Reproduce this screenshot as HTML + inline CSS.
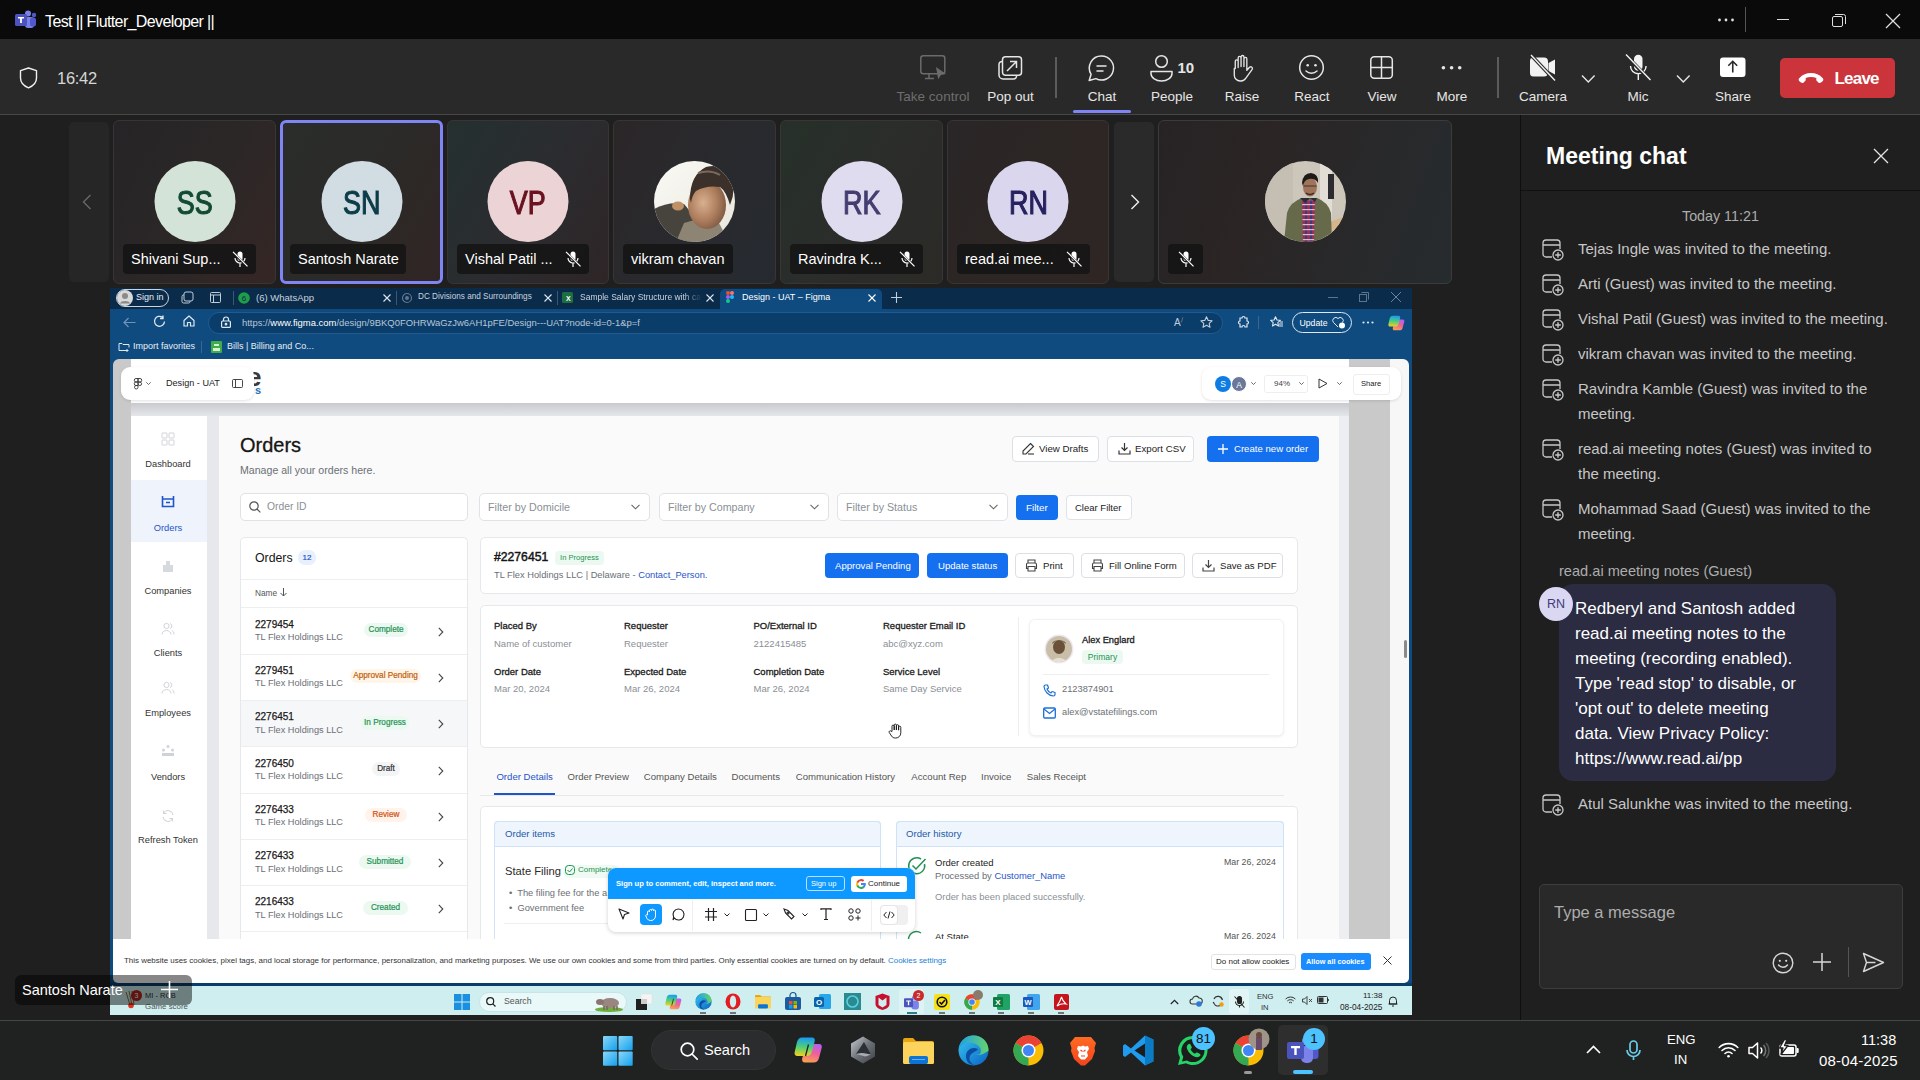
<!DOCTYPE html>
<html><head><meta charset="utf-8">
<style>
*{margin:0;padding:0;box-sizing:border-box}
html,body{width:1920px;height:1080px;overflow:hidden;background:#1f1f1f;font-family:"Liberation Sans",sans-serif;}
.a{position:absolute}
.t{position:absolute;white-space:nowrap;line-height:1}
svg{position:absolute;overflow:visible}
/* title bar */
#titlebar{left:0;top:0;width:1920px;height:39px;background:#0a0a0a}
#toolbar{left:0;top:39px;width:1920px;height:75px;background:#292929}
#tbline{left:0;top:114px;width:1920px;height:1px;background:#474747}
.lbl{position:absolute;top:90px;font-size:13.5px;color:#e6e6e6;white-space:nowrap;line-height:1;text-align:center;transform:translateX(-50%)}
/* tiles */
.tile{position:absolute;top:120px;height:164px;border-radius:6px;border:1px solid #3a3535;overflow:hidden}
.av{position:absolute;width:81px;height:81px;border-radius:50%;left:50%;top:41px;transform:translateX(-50%);text-align:center;line-height:84px;font-size:38px;-webkit-text-stroke:0.6px currentColor}
.nm{position:absolute;left:9px;top:123px;height:30px;background:rgba(20,20,20,.85);border-radius:4px;color:#fff;font-size:14.5px;line-height:30px;padding:0 8px;white-space:nowrap}
/* chat */
#chat{left:1521px;top:115px;width:399px;height:905px;background:#1f1f1f}
.msg{position:absolute;left:57px;color:#c7c7c7;font-size:15px;line-height:25px;width:320px}
.mi{position:absolute;left:-36px;top:3px}
/* taskbar */
#taskbar{left:0;top:1020px;width:1920px;height:60px;background:#202221;border-top:1px solid #444746}
</style></head>
<body>
<div id="titlebar" class="a">
  <svg style="left:15px;top:10px" width="22" height="20" viewBox="0 0 22 20">
    <circle cx="13" cy="3.5" r="3" fill="#7b83eb"/><circle cx="19" cy="5" r="2.2" fill="#5059c9"/>
    <rect x="10" y="7" width="9" height="11" rx="3" fill="#7b83eb"/>
    <rect x="15" y="7.5" width="6" height="9" rx="2.5" fill="#5059c9"/>
    <rect x="0" y="4" width="12" height="12" rx="1.5" fill="#4b53bc"/>
    <path d="M3 7h6v1.6H6.9V13H5.1V8.6H3z" fill="#fff"/>
  </svg>
  <div class="t" style="left:45px;top:14px;font-size:16px;letter-spacing:-0.62px;color:#fff">Test || Flutter_Developer ||</div>
  <svg style="left:1717px;top:17.5px" width="20" height="4" viewBox="0 0 20 4" fill="#e0e0e0"><circle cx="2.5" cy="2" r="1.4"/><circle cx="9" cy="2" r="1.4"/><circle cx="15.5" cy="2" r="1.4"/></svg>
  <div class="a" style="left:1745px;top:7px;width:1px;height:25px;background:#555"></div>
  <div class="a" style="left:1777px;top:19px;width:12px;height:1px;background:#ddd"></div>
  <svg style="left:1832px;top:13px" width="14" height="14" viewBox="0 0 14 14"><rect x="0.5" y="3.5" width="10" height="10" rx="1.5" fill="none" stroke="#ddd"/><path d="M3 1.5h8.5a2 2 0 0 1 2 2V11" fill="none" stroke="#ddd"/></svg>
  <svg style="left:1885px;top:12.5px" width="16" height="16" viewBox="0 0 16 16"><path d="M1 1L15 15M15 1L1 15" stroke="#ddd" stroke-width="1.3"/></svg>
</div>
<div id="toolbar" class="a">
  <svg style="left:19px;top:28px" width="19" height="22" viewBox="0 0 19 22"><path d="M9.5 1L17.5 3.6V11c0 4.5-3.4 8-8 9.8C4.9 19 1.5 15.5 1.5 11V3.6z" fill="none" stroke="#f0f0f0" stroke-width="1.4" stroke-linejoin="round"/></svg>
  <div class="t" style="left:57px;top:31px;font-size:16.5px;color:#d6d6d6;letter-spacing:-0.3px">16:42</div>
</div>
<div class="a" style="left:0;top:0;width:1920px;height:114px">
  <!-- take control -->
  <svg style="left:920px;top:55px" width="28" height="27" viewBox="0 0 28 27" fill="none" stroke="#6b6b6b" stroke-width="1.5"><rect x="0.8" y="0.8" width="24" height="18" rx="2.5"/><path d="M9 19v4.5M5 23.5h9"/><path d="M16 12l10 7-5 0.8-2.8 4.5z" fill="#6b6b6b" stroke="none"/></svg>
  <div class="lbl" style="left:933px;color:#6e6e6e">Take control</div>
  <!-- pop out -->
  <svg style="left:998px;top:56px" width="25" height="24" viewBox="0 0 25 24" fill="none" stroke="#e6e6e6" stroke-width="1.5"><rect x="4.5" y="0.8" width="19" height="18.5" rx="3"/><path d="M4.5 5.5a3 3 0 0 0-3.5 3V19a4 4 0 0 0 4 4h10.5a3 3 0 0 0 3-3.5"/><path d="M9 15l9-9M12 5.5h6.5V12"/></svg>
  <div class="lbl" style="left:1010.5px">Pop out</div>
  <div class="a" style="left:1055px;top:57px;width:1.5px;height:41px;background:#5c5c5c"></div>
  <!-- chat -->
  <svg style="left:1088px;top:55px" width="27" height="27" viewBox="0 0 27 27" fill="none" stroke="#e6e6e6" stroke-width="1.5"><path d="M13.5 1a12 12 0 1 1-5.6 22.6L1.2 25.5l1.9-6.2A12 12 0 0 1 13.5 1z" stroke-linejoin="round"/><path d="M9 11h9M9 16h6" stroke-linecap="round"/></svg>
  <div class="lbl" style="left:1102px">Chat</div>
  <div class="a" style="left:1073px;top:110px;width:58px;height:3px;border-radius:2px;background:#7f85f5"></div>
  <!-- people -->
  <svg style="left:1150px;top:55px" width="24" height="27" viewBox="0 0 24 27" fill="none" stroke="#e6e6e6" stroke-width="1.5"><circle cx="11.5" cy="6.5" r="5.8"/><path d="M1 16.5h21v2c0 4.5-5 7.5-10.5 7.5S1 23 1 18.5z" stroke-linejoin="round"/></svg>
  <div class="t" style="left:1177.5px;top:60px;font-size:15px;font-weight:700;color:#e6e6e6">10</div>
  <div class="lbl" style="left:1172px">People</div>
  <!-- raise -->
  <svg style="left:1231px;top:55px" width="23" height="27" viewBox="0 0 23 28" fill="none" stroke="#e6e6e6" stroke-width="1.4" stroke-linejoin="round" stroke-linecap="round"><path d="M4 14V6.5a1.5 1.5 0 0 1 3 0V13M7 12V3a1.5 1.5 0 0 1 3 0v9M10 12V2a1.5 1.5 0 0 1 3 0v10M13 12V4a1.5 1.5 0 0 1 3 0v12l2.5-3a1.8 1.8 0 0 1 3 2L15 24a6 6 0 0 1-5 3H9a6 6 0 0 1-6-6v-7"/></svg>
  <div class="lbl" style="left:1242px">Raise</div>
  <!-- react -->
  <svg style="left:1299px;top:55px" width="26" height="26" viewBox="0 0 26 26" fill="none" stroke="#e6e6e6" stroke-width="1.5"><circle cx="12.5" cy="12.5" r="11.8"/><circle cx="8.7" cy="10.2" r="1.3" fill="#e6e6e6" stroke="none"/><circle cx="16.5" cy="10.2" r="1.3" fill="#e6e6e6" stroke="none"/><path d="M7 16c3 3 8 3 11 0" stroke-linecap="round"/></svg>
  <div class="lbl" style="left:1312px">React</div>
  <!-- view -->
  <svg style="left:1370px;top:56px" width="24" height="24" viewBox="0 0 24 24" fill="none" stroke="#e6e6e6" stroke-width="1.5"><rect x="0.8" y="0.8" width="21.5" height="21.5" rx="3.5"/><path d="M11.5 1v21M1 11.5h21"/></svg>
  <div class="lbl" style="left:1382px">View</div>
  <!-- more -->
  <svg style="left:1440px;top:65px" width="24" height="6" viewBox="0 0 24 6" fill="#e6e6e6"><circle cx="3.4" cy="2.7" r="1.8"/><circle cx="11.6" cy="2.7" r="1.8"/><circle cx="19.7" cy="2.7" r="1.8"/></svg>
  <div class="lbl" style="left:1452px">More</div>
  <div class="a" style="left:1497px;top:57px;width:1.5px;height:41px;background:#5c5c5c"></div>
  <!-- camera -->
  <svg style="left:1529px;top:54px" width="28" height="28" viewBox="0 0 28 28"><path d="M4 3.5h11a4 4 0 0 1 4 4v11a4 4 0 0 1-4 4H4.5a3.5 3.5 0 0 1-3.5-3.5V7a3.5 3.5 0 0 1 3-3.5z" fill="#f2f2f2"/><path d="M19.5 9l6.5-3.5v15L19.5 17z" fill="#f2f2f2"/><path d="M1.5 0.5l24 25.5" stroke="#292929" stroke-width="3.5"/><path d="M2 1l24 25.5" stroke="#f2f2f2" stroke-width="1.4"/></svg>
  <div class="lbl" style="left:1543px">Camera</div>
  <svg style="left:1581px;top:74px" width="15" height="9" viewBox="0 0 15 9" fill="none" stroke="#e6e6e6" stroke-width="1.4"><path d="M1 1.5l6.3 6.5 6.3-6.5"/></svg>
  <!-- mic -->
  <svg style="left:1625px;top:54px" width="27" height="28" viewBox="0 0 27 28"><rect x="9" y="0.8" width="8.5" height="16" rx="4.25" fill="#f2f2f2"/><path d="M5.5 12a7.8 7.8 0 0 0 15.6 0M13.3 20v6" fill="none" stroke="#f2f2f2" stroke-width="1.4"/><path d="M0.8 1l24.5 25.5" stroke="#292929" stroke-width="3.5"/><path d="M1 0.6l24.5 25.5" stroke="#f2f2f2" stroke-width="1.4"/></svg>
  <div class="lbl" style="left:1638px">Mic</div>
  <svg style="left:1676px;top:74px" width="15" height="9" viewBox="0 0 15 9" fill="none" stroke="#e6e6e6" stroke-width="1.4"><path d="M1 1.5l6.3 6.5 6.3-6.5"/></svg>
  <!-- share -->
  <svg style="left:1720px;top:57px" width="26" height="21" viewBox="0 0 26 21"><rect x="0" y="0.5" width="25.5" height="19.5" rx="3" fill="#fff"/><path d="M12.75 15.5V4.5M8.3 8.8l4.45-4.5 4.45 4.5" fill="none" stroke="#292929" stroke-width="1.6"/></svg>
  <div class="lbl" style="left:1733px">Share</div>
  <!-- leave -->
  <div class="a" style="left:1780px;top:58px;width:115px;height:40px;border-radius:5px;background:#cc343c"></div>
  <svg style="left:1798px;top:72px" width="26" height="12" viewBox="0 0 26 12"><path d="M1.2 6.2C4.5 2.5 8.5 1 13 1s8.5 1.5 11.8 5.2c.8.9.7 2.3-.2 3l-1.6 1.4c-.8.6-1.9.6-2.6-.1l-1.5-1.4c-.5-.5-.8-1.2-.7-1.9l.2-1.3C16.7 5.4 14.9 5.1 13 5.1s-3.7.3-5.4.8l.2 1.3c.1.7-.2 1.4-.7 1.9L5.6 10.5c-.7.7-1.8.7-2.6.1L1.4 9.2C.5 8.5.4 7.1 1.2 6.2z" fill="#fff"/></svg>
  <div class="t" style="left:1834.5px;top:70px;font-size:17px;font-weight:700;color:#fff;letter-spacing:-0.8px">Leave</div>
</div>
<div id="tbline" class="a"></div>
<div class="a" style="left:69px;top:122px;width:40px;height:160px;border-radius:5px;background:#262626"></div>
<svg style="left:82px;top:194px" width="10" height="16" viewBox="0 0 10 16"><path d="M8.5 1L1.5 8l7 7" fill="none" stroke="#6a6a6a" stroke-width="1.3"/></svg>
<div class="tile" style="left:113px;width:163px;background:linear-gradient(120deg,#262426 0%,#2b2727 50%,#352625 100%);"><div class="av" style="background:#d3e3d8;color:#134a33;font-size:29px;top:40px"><span style="display:inline-block;transform:scale(0.93,1.12);-webkit-text-stroke:1px currentColor">SS</span></div>
  <div class="nm" style="left:9px;top:123px;width:133px">Shivani Sup...<svg style="left:109px;top:7px" width="16" height="17" viewBox="0 0 16 17"><rect x="5.5" y="0.5" width="5" height="9.5" rx="2.5" fill="#fff"/><path d="M3 7a5 5 0 0 0 10 0M8 12v4" fill="none" stroke="#fff" stroke-width="1.2"/><path d="M0.8 1.2l14.5 14.5" stroke="#161616" stroke-width="2.5"/><path d="M1 0.8l14.5 14.5" stroke="#fff" stroke-width="1.2"/></svg></div></div>
<div class="tile" style="left:280px;width:163px;background:linear-gradient(120deg,#2a2d2b 0%,#2b2a28 50%,#302524 100%);border:3px solid #7f85f5;"><div class="av" style="background:#d2dde3;color:#0c3c48;font-size:29px;top:38px"><span style="display:inline-block;transform:scale(0.93,1.12);-webkit-text-stroke:1px currentColor">SN</span></div>
  <div class="nm" style="left:7px;top:121px;width:116px">Santosh Narate</div></div>
<div class="tile" style="left:447px;width:162px;background:linear-gradient(120deg,#24302f 0%,#2b2c30 50%,#2e2526 100%);"><div class="av" style="background:#ebd3d6;color:#6a1220;font-size:29px;top:40px"><span style="display:inline-block;transform:scale(0.93,1.12);-webkit-text-stroke:1px currentColor">VP</span></div>
  <div class="nm" style="left:9px;top:123px;width:132px">Vishal Patil ...<svg style="left:108px;top:7px" width="16" height="17" viewBox="0 0 16 17"><rect x="5.5" y="0.5" width="5" height="9.5" rx="2.5" fill="#fff"/><path d="M3 7a5 5 0 0 0 10 0M8 12v4" fill="none" stroke="#fff" stroke-width="1.2"/><path d="M0.8 1.2l14.5 14.5" stroke="#161616" stroke-width="2.5"/><path d="M1 0.8l14.5 14.5" stroke="#fff" stroke-width="1.2"/></svg></div></div>
<div class="tile" style="left:613px;width:163px;background:linear-gradient(120deg,#2b2628 0%,#292a2e 50%,#262a30 100%);">
  <div class="nm" style="left:9px;top:123px;width:110px">vikram chavan</div></div>
<div class="tile" style="left:780px;width:163px;background:linear-gradient(120deg,#263029 0%,#2b2d2b 50%,#2b2a27 100%);"><div class="av" style="background:#e0dcef;color:#443e70;font-size:29px;top:40px"><span style="display:inline-block;transform:scale(0.93,1.12);-webkit-text-stroke:1px currentColor">RK</span></div>
  <div class="nm" style="left:9px;top:123px;width:133px">Ravindra K...<svg style="left:109px;top:7px" width="16" height="17" viewBox="0 0 16 17"><rect x="5.5" y="0.5" width="5" height="9.5" rx="2.5" fill="#fff"/><path d="M3 7a5 5 0 0 0 10 0M8 12v4" fill="none" stroke="#fff" stroke-width="1.2"/><path d="M0.8 1.2l14.5 14.5" stroke="#161616" stroke-width="2.5"/><path d="M1 0.8l14.5 14.5" stroke="#fff" stroke-width="1.2"/></svg></div></div>
<div class="tile" style="left:947px;width:162px;background:linear-gradient(120deg,#2a2527 0%,#2c2624 50%,#2f2624 100%);"><div class="av" style="background:#d9d6ee;color:#26225f;font-size:29px;top:40px"><span style="display:inline-block;transform:scale(0.93,1.12);-webkit-text-stroke:1px currentColor">RN</span></div>
  <div class="nm" style="left:9px;top:123px;width:133px">read.ai mee...<svg style="left:109px;top:7px" width="16" height="17" viewBox="0 0 16 17"><rect x="5.5" y="0.5" width="5" height="9.5" rx="2.5" fill="#fff"/><path d="M3 7a5 5 0 0 0 10 0M8 12v4" fill="none" stroke="#fff" stroke-width="1.2"/><path d="M0.8 1.2l14.5 14.5" stroke="#161616" stroke-width="2.5"/><path d="M1 0.8l14.5 14.5" stroke="#fff" stroke-width="1.2"/></svg></div></div>
<div class="a" style="left:1114px;top:122px;width:40px;height:160px;border-radius:5px;background:#2a2a2a"></div>
<svg style="left:1130px;top:194px" width="10" height="16" viewBox="0 0 10 16"><path d="M1.5 1l7 7-7 7" fill="none" stroke="#f0f0f0" stroke-width="1.4"/></svg>
<div class="tile" style="left:1158px;width:294px;background:linear-gradient(110deg,#272324 0%,#2b2525 35%,#28292b 70%,#262b2e 100%);border-color:#3b3b3b">
  <div class="nm" style="left:9px;top:123px;width:35px"><svg style="left:10px;top:7px" width="16" height="17" viewBox="0 0 16 17"><rect x="5.5" y="0.5" width="5" height="9.5" rx="2.5" fill="#fff"/><path d="M3 7a5 5 0 0 0 10 0M8 12v4" fill="none" stroke="#fff" stroke-width="1.2"/><path d="M0.8 1.2l14.5 14.5" stroke="#161616" stroke-width="2.5"/><path d="M1 0.8l14.5 14.5" stroke="#fff" stroke-width="1.2"/></svg></div></div>
<svg style="left:654px;top:161px" width="81" height="81" viewBox="0 0 81 81"><defs><clipPath id="cv"><circle cx="40.5" cy="40.5" r="40.5"/></clipPath>
<radialGradient id="fv" cx="0.4" cy="0.45" r="0.65"><stop offset="0" stop-color="#d8b090"/><stop offset="0.55" stop-color="#b08060"/><stop offset="1" stop-color="#7a5640"/></radialGradient>
<linearGradient id="bgv" x1="0" y1="0" x2="1" y2="1"><stop offset="0" stop-color="#fafaf5"/><stop offset="1" stop-color="#e8e6dc"/></linearGradient></defs>
<g clip-path="url(#cv)"><rect width="81" height="81" fill="url(#bgv)"/>
<path d="M0 48 Q15 40 30 43 L40 55 L38 81 L0 81z" fill="#47443e"/>
<path d="M22 81 L30 62 Q45 56 65 62 L75 81z" fill="#8e8474"/>
<ellipse cx="53" cy="44" rx="19" ry="24" fill="url(#fv)"/>
<path d="M36 38 Q36 14 52 6 Q70 2 78 16 Q82 30 76 44 Q72 30 66 26 Q52 24 42 30 Q38 34 37 42z" fill="#3b302a"/>
<path d="M44 12 Q56 8 66 14" stroke="#7a6a5e" stroke-width="2" fill="none"/>
<ellipse cx="24" cy="45" rx="6" ry="4.5" fill="#c09066"/>
</g></svg>
<svg style="left:1265px;top:161px" width="81" height="81" viewBox="0 0 81 81"><defs><clipPath id="cb"><circle cx="40.5" cy="40.5" r="40.5"/></clipPath>
<pattern id="plaid" width="5" height="5" patternUnits="userSpaceOnUse"><rect width="5" height="5" fill="#9a3058"/><rect x="0" y="0" width="2" height="5" fill="#3a3d78"/><rect x="0" y="3" width="5" height="1.2" fill="#d9b8d0"/></pattern></defs>
<g clip-path="url(#cb)"><rect width="81" height="81" fill="#cdc6ba"/><rect x="0" y="0" width="28" height="81" fill="#c4beb3"/><rect x="55" y="0" width="12" height="81" fill="#e2ded6"/><rect x="63" y="13" width="6" height="25" fill="#2c2c30"/><path d="M62 62 L81 55 L81 81 L62 81z" fill="#d5b58c"/>
<path d="M19 81 L22 52 Q25 41 37 37 L52 37 Q63 41 66 52 L67 81z" fill="#666a4a"/>
<path d="M37 39 L50 39 L49 81 L38 81z" fill="url(#plaid)"/>
<path d="M35 37 L40 42 L45 37 L50 41 L52 37z" fill="#2b2b3a"/>
<ellipse cx="45" cy="26" rx="7" ry="9.5" fill="#a0745a"/>
<path d="M37 22 Q38 12 46 12 Q54 13 53 22 Q50 17 44 18 Q39 19 38 25z" fill="#1e1a18"/>
<path d="M38.5 25 h13" stroke="#3a3430" stroke-width="1.1"/>
<path d="M41 32 Q45 35 49 32" stroke="#3a2a22" stroke-width="1.5" fill="none"/>
</g></svg>
<div id="chat" class="a"></div>
<div class="a" style="left:1520px;top:115px;width:1px;height:905px;background:#0e0e0e"></div>
<div class="a" style="left:1521px;top:190px;width:399px;height:1px;background:#111"></div>
<div class="t" style="left:1546px;top:145px;font-size:23px;font-weight:700;color:#fff">Meeting chat</div>
<svg style="left:1873px;top:148px" width="16" height="16" viewBox="0 0 16 16"><path d="M1 1l14 14M15 1L1 15" stroke="#e6e6e6" stroke-width="1.3"/></svg>
<div class="t" style="left:1682px;top:209px;font-size:14.3px;color:#adadad">Today 11:21</div>
<div class="msg" style="left:1578px;top:235.5px;width:330px;white-space:nowrap"><svg class="mi" width="22" height="22" viewBox="0 0 22 22" fill="none" stroke="#c7c7c7" stroke-width="1.3"><path d="M10 18H4a3 3 0 0 1-3-3V4a3 3 0 0 1 3-3h11a3 3 0 0 1 3 3v6M1 6h17"/><circle cx="16" cy="16" r="5" fill="#1f1f1f"/><path d="M16 13.2v5.6M13.2 16h5.6" stroke-width="1.4"/></svg>Tejas Ingle was invited to the meeting.</div>
<div class="msg" style="left:1578px;top:270.5px;width:330px;white-space:nowrap"><svg class="mi" width="22" height="22" viewBox="0 0 22 22" fill="none" stroke="#c7c7c7" stroke-width="1.3"><path d="M10 18H4a3 3 0 0 1-3-3V4a3 3 0 0 1 3-3h11a3 3 0 0 1 3 3v6M1 6h17"/><circle cx="16" cy="16" r="5" fill="#1f1f1f"/><path d="M16 13.2v5.6M13.2 16h5.6" stroke-width="1.4"/></svg>Arti (Guest) was invited to the meeting.</div>
<div class="msg" style="left:1578px;top:305.5px;width:330px;white-space:nowrap"><svg class="mi" width="22" height="22" viewBox="0 0 22 22" fill="none" stroke="#c7c7c7" stroke-width="1.3"><path d="M10 18H4a3 3 0 0 1-3-3V4a3 3 0 0 1 3-3h11a3 3 0 0 1 3 3v6M1 6h17"/><circle cx="16" cy="16" r="5" fill="#1f1f1f"/><path d="M16 13.2v5.6M13.2 16h5.6" stroke-width="1.4"/></svg>Vishal Patil (Guest) was invited to the meeting.</div>
<div class="msg" style="left:1578px;top:340.5px;width:330px;white-space:nowrap"><svg class="mi" width="22" height="22" viewBox="0 0 22 22" fill="none" stroke="#c7c7c7" stroke-width="1.3"><path d="M10 18H4a3 3 0 0 1-3-3V4a3 3 0 0 1 3-3h11a3 3 0 0 1 3 3v6M1 6h17"/><circle cx="16" cy="16" r="5" fill="#1f1f1f"/><path d="M16 13.2v5.6M13.2 16h5.6" stroke-width="1.4"/></svg>vikram chavan was invited to the meeting.</div>
<div class="msg" style="left:1578px;top:375.5px;width:330px;white-space:nowrap"><svg class="mi" width="22" height="22" viewBox="0 0 22 22" fill="none" stroke="#c7c7c7" stroke-width="1.3"><path d="M10 18H4a3 3 0 0 1-3-3V4a3 3 0 0 1 3-3h11a3 3 0 0 1 3 3v6M1 6h17"/><circle cx="16" cy="16" r="5" fill="#1f1f1f"/><path d="M16 13.2v5.6M13.2 16h5.6" stroke-width="1.4"/></svg>Ravindra Kamble (Guest) was invited to the<br>meeting.</div>
<div class="msg" style="left:1578px;top:435.5px;width:330px;white-space:nowrap"><svg class="mi" width="22" height="22" viewBox="0 0 22 22" fill="none" stroke="#c7c7c7" stroke-width="1.3"><path d="M10 18H4a3 3 0 0 1-3-3V4a3 3 0 0 1 3-3h11a3 3 0 0 1 3 3v6M1 6h17"/><circle cx="16" cy="16" r="5" fill="#1f1f1f"/><path d="M16 13.2v5.6M13.2 16h5.6" stroke-width="1.4"/></svg>read.ai meeting notes (Guest) was invited to<br>the meeting.</div>
<div class="msg" style="left:1578px;top:495.5px;width:330px;white-space:nowrap"><svg class="mi" width="22" height="22" viewBox="0 0 22 22" fill="none" stroke="#c7c7c7" stroke-width="1.3"><path d="M10 18H4a3 3 0 0 1-3-3V4a3 3 0 0 1 3-3h11a3 3 0 0 1 3 3v6M1 6h17"/><circle cx="16" cy="16" r="5" fill="#1f1f1f"/><path d="M16 13.2v5.6M13.2 16h5.6" stroke-width="1.4"/></svg>Mohammad Saad (Guest) was invited to the<br>meeting.</div>
<div class="msg" style="left:1578px;top:790.5px;width:330px;white-space:nowrap"><svg class="mi" width="22" height="22" viewBox="0 0 22 22" fill="none" stroke="#c7c7c7" stroke-width="1.3"><path d="M10 18H4a3 3 0 0 1-3-3V4a3 3 0 0 1 3-3h11a3 3 0 0 1 3 3v6M1 6h17"/><circle cx="16" cy="16" r="5" fill="#1f1f1f"/><path d="M16 13.2v5.6M13.2 16h5.6" stroke-width="1.4"/></svg>Atul Salunkhe was invited to the meeting.</div>
<div class="t" style="left:1559px;top:564px;font-size:14.6px;color:#adadad">read.ai meeting notes (Guest)</div>
<div class="a" style="left:1559px;top:584px;width:277px;height:197px;border-radius:14px;background:#2b2b41"></div>
<div class="a" style="left:1539px;top:587px;width:34px;height:34px;border-radius:50%;background:#d9d7f1;color:#3e3b78;font-size:12.5px;line-height:34px;text-align:center">RN</div>
<div class="a" style="left:1575px;top:596px;font-size:17px;line-height:25px;color:#fff;white-space:nowrap">Redberyl and Santosh added<br>read.ai meeting notes to the<br>meeting (recording enabled).<br>Type 'read stop' to disable, or<br>'opt out' to delete meeting<br>data. View Privacy Policy:<br>https://www.read.ai/pp</div>
<div class="a" style="left:1539px;top:884px;width:364px;height:105px;border-radius:5px;background:#292929;border:1px solid #3d3d3d"></div>
<div class="t" style="left:1554px;top:904px;font-size:16.5px;color:#adadad">Type a message</div>
<svg style="left:1772px;top:952px" width="22" height="22" viewBox="0 0 22 22" fill="none" stroke="#d6d6d6" stroke-width="1.4"><circle cx="11" cy="11" r="9.8"/><circle cx="7.8" cy="8.8" r="1.1" fill="#d6d6d6" stroke="none"/><circle cx="14.2" cy="8.8" r="1.1" fill="#d6d6d6" stroke="none"/><path d="M6.5 13c2.5 3 6.5 3 9 0" stroke-linecap="round"/></svg>
<svg style="left:1812px;top:952px" width="20" height="20" viewBox="0 0 20 20" stroke="#d6d6d6" stroke-width="1.5"><path d="M10 1v18M1 10h18"/></svg>
<div class="a" style="left:1848px;top:947px;width:1px;height:30px;background:#555"></div>
<svg style="left:1862px;top:952px" width="23" height="21" viewBox="0 0 23 21" fill="none" stroke="#d6d6d6" stroke-width="1.4" stroke-linejoin="round"><path d="M1.5 1.5l20 9-20 9 3-9zM4.5 10.5h9"/></svg>
<div id="taskbar" class="a"></div>
<svg style="left:603px;top:1036px" width="30" height="30" viewBox="0 0 30 30"><defs><linearGradient id="wg" x1="0" y1="0" x2="1" y2="1"><stop offset="0" stop-color="#8ad8f7"/><stop offset="1" stop-color="#13a0ef"/></linearGradient></defs><rect x="0" y="0" width="14.2" height="14.2" rx="1" fill="url(#wg)"/><rect x="15.5" y="0" width="14.2" height="14.2" rx="1" fill="url(#wg)"/><rect x="0" y="15.5" width="14.2" height="14.2" rx="1" fill="url(#wg)"/><rect x="15.5" y="15.5" width="14.2" height="14.2" rx="1" fill="url(#wg)"/></svg>
<div class="a" style="left:651px;top:1030px;width:125px;height:40px;border-radius:20px;background:#2b2c2d;border:1px solid #323334"></div>
<svg style="left:680px;top:1042px" width="18" height="18" viewBox="0 0 18 18" fill="none" stroke="#fff" stroke-width="1.7"><circle cx="7.5" cy="7.5" r="6.3"/><path d="M12 12l5.2 5.2" stroke-linecap="round"/></svg>
<div class="t" style="left:704px;top:1043px;font-size:14.6px;color:#fff">Search</div>
<svg style="left:794px;top:1037px" width="29" height="26" viewBox="0 0 29 26"><defs><linearGradient id="cp1" x1="0.4" y1="0" x2="0.3" y2="1"><stop offset="0" stop-color="#1a9af5"/><stop offset="0.5" stop-color="#4ccf7a"/><stop offset="1" stop-color="#f2d020"/></linearGradient><linearGradient id="cp2" x1="0.7" y1="0" x2="0.4" y2="1"><stop offset="0" stop-color="#b75ef2"/><stop offset="0.5" stop-color="#f0609a"/><stop offset="1" stop-color="#f8a050"/></linearGradient></defs><path d="M16 7h9c2.5 0 3.2 1.8 2.7 3.8L25 21c-.8 3-2.6 4.5-5.5 4.5H11c-2.5 0-3.3-2-2.8-4L11 11c.8-2.7 2.5-4 5-4z" fill="url(#cp2)"/><path d="M8 0.5h10c2.5 0 3.2 1.8 2.7 3.8L18 14.5c-.8 3-2.6 4.5-5.5 4.5H3.5C1 19 .2 17 .7 15L3 5c.8-2.7 2.5-4.5 5-4.5z" fill="url(#cp1)"/><path d="M14.5 7.5L11.5 19" stroke="#202221" stroke-width="1.3"/></svg>
<svg style="left:850px;top:1036px" width="26" height="28" viewBox="0 0 26 28"><defs><linearGradient id="hx" x1="0" y1="0" x2="1" y2="1"><stop offset="0" stop-color="#c9cdd3"/><stop offset="0.5" stop-color="#6d7279"/><stop offset="1" stop-color="#3d4046"/></linearGradient></defs><path d="M13 0.5l12 7v13l-12 7-12-7v-13z" fill="url(#hx)"/><path d="M14 6l7 12.5-9-1.5-6 1z" fill="#2c2f34"/><path d="M6 18l6-1 9 1.5-5.5 2z" fill="#a8adb4"/></svg>
<svg style="left:903px;top:1037px" width="31" height="27" viewBox="0 0 31 27"><path d="M0 3a2 2 0 0 1 2-2h8l3 3h16a2 2 0 0 1 2 2v3H0z" fill="#e8a710"/><rect x="0" y="5" width="31" height="22" rx="1.5" fill="#fcd45c"/><rect x="6" y="19" width="19" height="8" rx="2" fill="#0c74d4"/><path d="M9 22.5h13" stroke="#fff" stroke-width="0.8" opacity="0.5"/></svg>
<svg style="left:958px;top:1035px" width="31" height="31" viewBox="0 0 31 31"><defs><linearGradient id="eg1" x1="0" y1="0" x2="1" y2="1"><stop offset="0" stop-color="#37c6f0"/><stop offset="1" stop-color="#0a63c5"/></linearGradient><linearGradient id="eg2" x1="0" y1="0" x2="1" y2="0"><stop offset="0" stop-color="#1ea0e8"/><stop offset="1" stop-color="#66d36b"/></linearGradient></defs><circle cx="15.5" cy="15.5" r="15" fill="url(#eg1)"/><path d="M30.5 15.5C30.5 7 24 0.5 15.5 0.5 8 0.5 2 6 1 13c3-4 8-6 13-5 7 1 10 6 8.5 10-1 2-4 2.5-6 1.5 5 1 8.5 0 11-2 2-1 3-2 3-2z" fill="url(#eg2)"/><path d="M8 21c0-5 4-8 8-8 3 0 4 1.5 4 1.5C18 17 12 17.5 11.5 23c-.3 3 2 5.5 5 7C11 30 8 26 8 21z" fill="#0b4fa3"/></svg>
<svg style="left:1013px;top:1035px" width="31" height="31" viewBox="0 0 31 31"><circle cx="15.5" cy="15.5" r="15" fill="#fbbc04"/><path d="M15.5 15.5L2.5 8A15 15 0 0 1 28.5 8z" fill="#ea4335"/><path d="M15.5 15.5L2.5 8A15 15 0 0 0 15.5 30.5z" fill="#34a853"/><circle cx="15.5" cy="15.5" r="7" fill="#fff"/><circle cx="15.5" cy="15.5" r="5.5" fill="#4285f4"/></svg>
<svg style="left:1070px;top:1037px" width="26" height="29" viewBox="0 0 26 29"><defs><linearGradient id="bg" x1="0" y1="0" x2="0" y2="1"><stop offset="0" stop-color="#ff6a22"/><stop offset="1" stop-color="#f2441c"/></linearGradient></defs><path d="M5 0h16l2.5 3L26 6l-1.5 5L25 14l-3 8-7 6.5h-4L4 22l-3-8 .5-3L0 6l2.5-3z" fill="url(#bg)"/><path d="M8 9l3 .5 2 -1 2 1 3-.5 1 3-2 3 1 4-3 3.5h-4L8 19l1-4-2-3z" fill="#fff"/><path d="M10.5 13l2 1.5M15.5 13l-2 1.5M11 19h4" stroke="#f2441c" stroke-width="1.2"/></svg>
<svg style="left:1123px;top:1035px" width="31" height="31" viewBox="0 0 31 31"><path d="M22 0.5l8.5 4v22l-8.5 4-14-13-6 4.5L0 20.5v-10l2-1.5 6 4.5z" fill="#1f9cf0"/><path d="M22 8.5L11.5 15.5 22 22.5z" fill="#1c1c1c"/><path d="M22 0.5l8.5 4v22l-8.5 4z" fill="#0065a9" opacity="0.6"/></svg>
<svg style="left:1177px;top:1035px" width="32" height="31" viewBox="0 0 32 31"><path d="M16 1a14.5 14.5 0 0 1 0 29c-2.5 0-5-.7-7-1.8L1 30l2-7.5A14.5 14.5 0 0 1 16 1z" fill="#25d366"/><path d="M16 4a11.5 11.5 0 0 1 0 23c-2.2 0-4.2-.6-6-1.6L5 26.5l1.3-4.7A11.5 11.5 0 0 1 16 4z" fill="#1c1c1c"/><path d="M11 9.5c.5-1 2-1 2.5 0l1.2 2.5c.3.6 0 1.2-.5 1.6l-.7.6c1 2 2.5 3.5 4.5 4.5l.6-.7c.4-.5 1-.8 1.6-.5l2.5 1.2c1 .5 1 2 0 2.5-1.5 1-3 1.3-5 .5-3.5-1.5-6-4-7.5-7.5-.8-2-.5-3.5.8-4.7z" fill="#25d366"/></svg>
<div class="a" style="left:1192px;top:1027px;width:23px;height:23px;border-radius:50%;background:#4cc2ff;color:#111;font-size:13.5px;line-height:23px;text-align:center">81</div>
<svg style="left:1233px;top:1035px" width="31" height="31" viewBox="0 0 31 31"><circle cx="15.5" cy="15.5" r="15" fill="#fbbc04"/><path d="M15.5 15.5L2.5 8A15 15 0 0 1 28.5 8z" fill="#ea4335"/><path d="M15.5 15.5L2.5 8A15 15 0 0 0 15.5 30.5z" fill="#34a853"/><circle cx="15.5" cy="15.5" r="7" fill="#fff"/><circle cx="15.5" cy="15.5" r="5.5" fill="#4285f4"/></svg>
<svg style="left:1248px;top:1028px" width="22" height="22" viewBox="0 0 22 22"><circle cx="11" cy="11" r="10.5" fill="#9e9488"/><rect x="8" y="9" width="6" height="13" fill="#6a4a6a"/><circle cx="11" cy="7" r="3" fill="#6b4a3a"/></svg>
<div class="a" style="left:1244px;top:1071px;width:8px;height:3px;border-radius:2px;background:#9a9a9a"></div>
<div class="a" style="left:1278px;top:1025px;width:50px;height:50px;border-radius:5px;background:#2e2e2e"></div>
<svg style="left:1287px;top:1036px" width="32" height="28" viewBox="0 0 32 28"><circle cx="19" cy="5" r="4" fill="#7b83eb"/><circle cx="27" cy="7.5" r="3" fill="#5059c9"/><rect x="23" y="11" width="8.5" height="12" rx="3" fill="#5059c9"/><rect x="14" y="10" width="12" height="17" rx="5" fill="#7b83eb"/><rect x="0" y="6" width="17" height="17" rx="2" fill="#4b53bc"/><path d="M4 10h9v2.2H9.7V19H7.3v-6.8H4z" fill="#fff"/></svg>
<div class="a" style="left:1303px;top:1028px;width:22px;height:22px;border-radius:50%;background:#4cc2ff;color:#111;font-size:13.5px;line-height:22px;text-align:center">1</div>
<div class="a" style="left:1293px;top:1070px;width:20px;height:3.5px;border-radius:2px;background:#4cc2ff"></div>
<svg style="left:1586px;top:1045px" width="15" height="9" viewBox="0 0 15 9" fill="none" stroke="#fff" stroke-width="1.6"><path d="M1 8l6.5-6.5L14 8"/></svg>
<svg style="left:1626px;top:1040px" width="15" height="21" viewBox="0 0 15 21" fill="none" stroke="#6ccbea" stroke-width="1.7"><rect x="4" y="1" width="7" height="12" rx="3.5"/><path d="M1 10a6.5 6.5 0 0 0 13 0M7.5 16.5V20"/></svg>
<div class="t" style="left:1667px;top:1033px;font-size:13.2px;color:#fff">ENG</div>
<div class="t" style="left:1674px;top:1053px;font-size:13.2px;color:#fff">IN</div>
<svg style="left:1718px;top:1042px" width="21" height="16" viewBox="0 0 21 16" fill="none" stroke="#fff" stroke-width="1.6" stroke-linecap="round"><path d="M1.2 5.5a13 13 0 0 1 18.6 0M4 8.5a9 9 0 0 1 13 0M7 11.5a5 5 0 0 1 7 0"/><circle cx="10.5" cy="14.3" r="1.3" fill="#fff" stroke="none"/></svg>
<svg style="left:1748px;top:1042px" width="21" height="17" viewBox="0 0 21 17" fill="none" stroke-width="1.5"><path d="M1 5.5h3.5L9.5 1v15L4.5 11.5H1z" stroke="#fff" stroke-linejoin="round"/><path d="M12.5 5.5a4 4 0 0 1 0 6" stroke="#fff"/><path d="M15.5 3a8 8 0 0 1 0 11" stroke="#777"/><path d="M18 1a11 11 0 0 1 0 15" stroke="#555"/></svg>
<svg style="left:1777px;top:1039px" width="23" height="19" viewBox="0 0 23 19"><rect x="3" y="6" width="16" height="11" rx="2" fill="none" stroke="#fff" stroke-width="1.5"/><rect x="19.5" y="9" width="2.2" height="5" rx="1" fill="#fff"/><rect x="5" y="8" width="12" height="7" rx="0.8" fill="#fff"/><path d="M7.5 0.5L2.5 9h3.5l-2 6.5 7-9H7.5l2.5-6z" fill="#fff" stroke="#202221" stroke-width="1.3" stroke-linejoin="round"/></svg>
<div class="t" style="left:1861px;top:1033px;font-size:14.5px;color:#fff">11:38</div>
<div class="t" style="left:1819px;top:1053px;font-size:15px;color:#fff;letter-spacing:0.2px">08-04-2025</div>
<!-- ===== shared screen ===== -->
<div class="a" style="left:110px;top:288px;width:1302px;height:21px;background:#0b2b4b"></div>
<div class="a" style="left:110px;top:309px;width:1302px;height:50px;background:#0f4b7f"></div>
<div class="a" style="left:110px;top:359px;width:3px;height:625px;background:#0f4b7f"></div>
<div class="a" style="left:1409px;top:359px;width:3px;height:625px;background:#0f4b7f"></div>
<!-- tabs -->
<div class="a" style="left:116px;top:289px;width:53px;height:18px;border-radius:9px;border:1px solid #c9d4df"></div>
<svg style="left:117px;top:290px" width="16" height="16" viewBox="0 0 16 16"><circle cx="8" cy="8" r="8" fill="#d9d9d9"/><circle cx="8" cy="6" r="3" fill="#8a8a8a"/><path d="M2.5 13.5a6 4 0 0 1 11 0" fill="#8a8a8a"/></svg>
<div class="t" style="left:136px;top:293px;font-size:9px;color:#e8eef5">Sign in</div>
<svg style="left:181px;top:291px" width="13" height="13" viewBox="0 0 13 13" fill="none" stroke="#c0ccd8" stroke-width="1"><rect x="3" y="1" width="9" height="9" rx="2"/><path d="M3 4H2.5a1.5 1.5 0 0 0-1.5 1.5v5a1.5 1.5 0 0 0 1.5 1.5h5A1.5 1.5 0 0 0 9 10.5V10"/></svg>
<svg style="left:210px;top:292px" width="11" height="11" viewBox="0 0 11 11" fill="none" stroke="#c0ccd8" stroke-width="1"><rect x="0.5" y="0.5" width="10" height="10" rx="1"/><path d="M0.5 3h10M3.5 3v7.5"/></svg>
<div class="a" style="left:233px;top:291px;width:1px;height:14px;background:#3a5878"></div>
<svg style="left:238px;top:292px" width="12" height="12" viewBox="0 0 12 12"><circle cx="6" cy="6" r="5.8" fill="#1f9e4a"/><text x="6" y="9" font-size="8" text-anchor="middle" fill="#0b2b4b" font-family="Liberation Sans">6</text></svg>
<div class="t" style="left:256px;top:293px;font-size:9.5px;color:#c9d3de">(6) WhatsApp</div>
<svg style="left:383px;top:294px" width="8" height="8" viewBox="0 0 8 8" stroke="#dfe6ee" stroke-width="1.1"><path d="M0.5 0.5l7 7M7.5 0.5l-7 7"/></svg>
<div class="a" style="left:396px;top:291px;width:1px;height:14px;background:#3a5878"></div>
<svg style="left:402px;top:293px" width="10" height="10" viewBox="0 0 10 10"><circle cx="5" cy="5" r="4.5" fill="none" stroke="#5e7690" stroke-width="1.2"/><circle cx="5" cy="5" r="2" fill="#5e7690"/></svg>
<div class="t" style="left:418px;top:293px;font-size:8.2px;color:#c9d3de">DC Divisions and Surroundings</div>
<svg style="left:544px;top:294px" width="8" height="8" viewBox="0 0 8 8" stroke="#dfe6ee" stroke-width="1.1"><path d="M0.5 0.5l7 7M7.5 0.5l-7 7"/></svg>
<div class="a" style="left:557px;top:291px;width:1px;height:14px;background:#3a5878"></div>
<svg style="left:562px;top:292px" width="11" height="11" viewBox="0 0 11 11"><rect width="11" height="11" rx="1.5" fill="#1d6f42"/><text x="4" y="8.5" font-size="7" font-weight="700" fill="#fff" font-family="Liberation Sans">X</text></svg>
<div class="t" style="left:580px;top:293px;font-size:8.5px;color:#c9d3de;width:122px;overflow:hidden;-webkit-mask-image:linear-gradient(90deg,#000 85%,transparent)">Sample Salary Structure with calc</div>
<svg style="left:706px;top:294px" width="8" height="8" viewBox="0 0 8 8" stroke="#dfe6ee" stroke-width="1.1"><path d="M0.5 0.5l7 7M7.5 0.5l-7 7"/></svg>
<div class="a" style="left:720px;top:289px;width:162px;height:21px;border-radius:5px 5px 0 0;background:#0f4b7f"></div>
<svg style="left:726px;top:291px" width="8" height="12" viewBox="0 0 8 12"><rect x="0" y="0" width="4" height="4" rx="2" fill="#f24e1e"/><rect x="4" y="0" width="4" height="4" rx="2" fill="#ff7262"/><rect x="0" y="4" width="4" height="4" rx="2" fill="#a259ff"/><circle cx="6" cy="6" r="2" fill="#1abcfe"/><rect x="0" y="8" width="4" height="4" rx="2" fill="#0acf83"/></svg>
<div class="t" style="left:742px;top:293px;font-size:9px;color:#fff">Design - UAT &ndash; Figma</div>
<svg style="left:868px;top:294px" width="8" height="8" viewBox="0 0 8 8" stroke="#fff" stroke-width="1.1"><path d="M0.5 0.5l7 7M7.5 0.5l-7 7"/></svg>
<svg style="left:891px;top:292px" width="11" height="11" viewBox="0 0 11 11" stroke="#c0ccd8" stroke-width="1.1"><path d="M5.5 0v11M0 5.5h11"/></svg>
<div class="a" style="left:1328px;top:297px;width:10px;height:1px;background:#5c7690"></div>
<svg style="left:1359px;top:292px" width="10" height="10" viewBox="0 0 10 10" fill="none" stroke="#5c7690"><rect x="0.5" y="2.5" width="7" height="7"/><path d="M2.5 0.5h7v7"/></svg>
<svg style="left:1391px;top:292px" width="10" height="10" viewBox="0 0 10 10" stroke="#6a849e" stroke-width="1"><path d="M0 0l10 10M10 0L0 10"/></svg>
<!-- address row -->
<svg style="left:123px;top:317px" width="13" height="11" viewBox="0 0 13 11" fill="none" stroke="#6f93b8" stroke-width="1.2"><path d="M12.5 5.5H1M5.5 1L1 5.5 5.5 10"/></svg>
<svg style="left:153px;top:315px" width="13" height="13" viewBox="0 0 13 13" fill="none" stroke="#e0e8f0" stroke-width="1.3"><path d="M11.5 6.5A5 5 0 1 1 9.5 2.3M10 0.5v3H7"/></svg>
<svg style="left:183px;top:315px" width="12" height="12" viewBox="0 0 12 12" fill="none" stroke="#e0e8f0" stroke-width="1.2"><path d="M1 5.5L6 1l5 4.5V11H7.5V7.5h-3V11H1z" stroke-linejoin="round"/></svg>
<div class="a" style="left:208px;top:312px;width:1015px;height:22px;border-radius:11px;background:#0b3d6a;border:1px solid #1f5a90"></div>
<svg style="left:221px;top:316px" width="10" height="12" viewBox="0 0 10 12" fill="none" stroke="#e0e8f0" stroke-width="1.2"><rect x="0.6" y="5" width="8.8" height="6.4" rx="1"/><path d="M2.5 5V3.5a2.5 2.5 0 0 1 5 0V5"/><circle cx="5" cy="8.2" r="0.8" fill="#e0e8f0"/></svg>
<div class="t" style="left:242px;top:318px;font-size:9.45px;color:#b8c7d6">https://<span style="color:#fff">www.figma.com</span>/design/9BKQ0FOHRWaGzJw6AH1pFE/Design---UAT?node-id=0-1&amp;p=f</div>
<div class="t" style="left:1174px;top:317px;font-size:10px;color:#c0ccd8">A<sup style="font-size:6px">&#x29F8;</sup></div>
<svg style="left:1200px;top:316px" width="13" height="12" viewBox="0 0 13 12" fill="none" stroke="#c0ccd8" stroke-width="1.1"><path d="M6.5 0.8l1.7 3.6 3.9.4-2.9 2.6.8 3.9-3.5-2-3.5 2 .8-3.9L0.9 4.8l3.9-.4z" stroke-linejoin="round"/></svg>
<svg style="left:1237px;top:316px" width="12" height="12" viewBox="0 0 12 12" fill="none" stroke="#e0e8f0" stroke-width="1.2"><path d="M3 2h2a1.5 1.5 0 0 1 3 0h2v3a1.5 1.5 0 0 1 0 3v3H8a1.5 1.5 0 0 0-3 0H3V8a1.5 1.5 0 0 1 0-3z"/></svg>
<div class="a" style="left:1258px;top:316px;width:1px;height:13px;background:#3a6890"></div>
<svg style="left:1270px;top:316px" width="13" height="12" viewBox="0 0 13 12" fill="none" stroke="#e0e8f0" stroke-width="1.1"><path d="M5.5 0.8l1.5 3.2 3.4.3-2.6 2.3.7 3.4-3-1.8-3 1.8.7-3.4L0.7 4.3l3.4-.3z" stroke-linejoin="round"/><path d="M9 8h4M9 10h4M10 6h3"/></svg>
<div class="a" style="left:1292px;top:312px;width:60px;height:21px;border-radius:11px;border:1.2px solid #e0e8f0"></div>
<div class="t" style="left:1299.5px;top:318.5px;font-size:8.7px;color:#fff">Update</div>
<svg style="left:1332px;top:316px" width="14" height="13" viewBox="0 0 14 13" fill="none" stroke="#e0e8f0" stroke-width="1"><path d="M6 11L1.5 6.5a3 3 0 0 1 4.5-4 3 3 0 0 1 4.5 4"/><circle cx="10" cy="9.5" r="3" fill="#fff" stroke="none"/></svg>
<svg style="left:1362px;top:321px" width="12" height="3" viewBox="0 0 12 3" fill="#e0e8f0"><circle cx="1.5" cy="1.5" r="1.1"/><circle cx="6" cy="1.5" r="1.1"/><circle cx="10.5" cy="1.5" r="1.1"/></svg>
<svg style="left:1388px;top:315px" width="17" height="16" viewBox="0 0 29 26"><path d="M16 7h9c2.5 0 3.2 1.8 2.7 3.8L25 21c-.8 3-2.6 4.5-5.5 4.5H11c-2.5 0-3.3-2-2.8-4L11 11c.8-2.7 2.5-4 5-4z" fill="url(#cp2)"/><path d="M8 0.5h10c2.5 0 3.2 1.8 2.7 3.8L18 14.5c-.8 3-2.6 4.5-5.5 4.5H3.5C1 19 .2 17 .7 15L3 5c.8-2.7 2.5-4.5 5-4.5z" fill="url(#cp1)"/></svg>
<!-- bookmarks -->
<svg style="left:118px;top:341px" width="12" height="11" viewBox="0 0 12 11" fill="none" stroke="#e0e8f0" stroke-width="1"><path d="M1 2.5V9.5h7M1 2.5h3l1 1h6v3"/><path d="M9 8v3M7.5 9.5h3"/></svg>
<div class="t" style="left:133px;top:342px;font-size:9px;color:#e8eef5">Import favorites</div>
<div class="a" style="left:201px;top:341px;width:1px;height:12px;background:#3a6890"></div>
<svg style="left:211px;top:341px" width="11" height="12" viewBox="0 0 11 12"><rect width="11" height="12" rx="1" fill="#3fae49"/><path d="M3 3h5v2H3zM2 7h7v3H2z" fill="#d5f0d0"/></svg>
<div class="t" style="left:227px;top:342px;font-size:9px;color:#e8eef5">Bills | Billing and Co...</div>
<!-- ===== page ===== -->
<div class="a" style="left:110px;top:359px;width:1302px;height:626px;background:#0f4b7f"></div>
<div class="a" style="left:113px;top:359px;width:1296px;height:580px;background:#fafafa;overflow:hidden">
</div>
<div class="a" style="left:113px;top:359px;width:18px;height:580px;background:#c9c9c9"></div>
<div class="a" style="left:1349px;top:359px;width:41px;height:580px;background:#c9c9c9"></div>
<div class="a" style="left:1390px;top:359px;width:19px;height:580px;background:#f7f7f7"></div>
<div class="a" style="left:1404px;top:640px;width:3px;height:18px;border-radius:2px;background:#8a8a8a"></div>
<svg style="left:113px;top:359px" width="6" height="6" viewBox="0 0 6 6"><path d="M0 0H6A6 6 0 0 0 0 6z" fill="#0f4b7f"/></svg>
<svg style="left:1403px;top:359px" width="6" height="6" viewBox="0 0 6 6"><path d="M6 0H0A6 6 0 0 1 6 6z" fill="#0f4b7f"/></svg>
<!-- header band -->
<div class="a" style="left:131px;top:359px;width:1218px;height:44px;background:#fff"></div>
<div class="a" style="left:131px;top:403px;width:1218px;height:13px;background:linear-gradient(#c9cacf,#e4e6ea)"></div>
<div class="t" style="left:238px;top:365px;font-size:28px;font-weight:700;color:#222">&nbsp;</div>
<!-- sidebar -->
<div class="a" style="left:131px;top:416px;width:76px;height:523px;background:#fff"></div>
<div class="a" style="left:207px;top:416px;width:12px;height:523px;background:#e6e8ec"></div>
<div class="a" style="left:131px;top:480px;width:76px;height:62px;background:#eef3fc"></div>
<div class="a" style="left:1339px;top:416px;width:10px;height:523px;background:#eceef1"></div>
<svg style="left:161px;top:432px" width="14" height="14" viewBox="0 0 14 14" fill="none" stroke="#cfd3d8" stroke-width="1"><rect x="1" y="1" width="5" height="5" rx=".5"/><rect x="8" y="1" width="5" height="5" rx=".5"/><rect x="1" y="8" width="5" height="5" rx=".5"/><rect x="8" y="8" width="5" height="5" rx=".5"/></svg>
<div class="t" style="left:168px;top:460.0px;font-size:9.3px;color:#333;transform:translateX(-50%)">Dashboard</div>
<svg style="left:161px;top:495px" width="14" height="14" viewBox="0 0 14 14" fill="none" stroke="#cfd3d8" stroke-width="1"><path d="M1.5 1v10.5h11V1M1.5 4h11M5 7.5h4" stroke="#1f55c9" stroke-width="1.6"/></svg>
<div class="t" style="left:168px;top:523.5px;font-size:9.3px;color:#1f55c9;transform:translateX(-50%)">Orders</div>
<svg style="left:161px;top:559px" width="14" height="14" viewBox="0 0 14 14" fill="none" stroke="#cfd3d8" stroke-width="1"><path d="M2 13V6h3V2h4v4h3v7z" fill="#d6d9de" stroke="none"/></svg>
<div class="t" style="left:168px;top:587.0px;font-size:9.3px;color:#333;transform:translateX(-50%)">Companies</div>
<svg style="left:161px;top:622px" width="14" height="14" viewBox="0 0 14 14" fill="none" stroke="#cfd3d8" stroke-width="1"><circle cx="5.5" cy="4" r="2.6"/><path d="M1 12.5a4.5 4 0 0 1 9 0"/><path d="M9 1.5a2.6 2.6 0 0 1 0 5M11 8.5a4 4 0 0 1 2 4"/></svg>
<div class="t" style="left:168px;top:648.5px;font-size:9.3px;color:#333;transform:translateX(-50%)">Clients</div>
<svg style="left:161px;top:681px" width="14" height="14" viewBox="0 0 14 14" fill="none" stroke="#cfd3d8" stroke-width="1"><circle cx="5.5" cy="4" r="2.6"/><path d="M1 12.5a4.5 4 0 0 1 9 0"/><path d="M9 1.5a2.6 2.6 0 0 1 0 5M11 8.5a4 4 0 0 1 2 4"/></svg>
<div class="t" style="left:168px;top:709.0px;font-size:9.3px;color:#333;transform:translateX(-50%)">Employees</div>
<svg style="left:161px;top:744px" width="14" height="14" viewBox="0 0 14 14" fill="none" stroke="#cfd3d8" stroke-width="1"><circle cx="7" cy="2.5" r="1.5" fill="#cfd3d8" stroke="none"/><circle cx="2.5" cy="6" r="1.5" fill="#cfd3d8" stroke="none"/><circle cx="11.5" cy="6" r="1.5" fill="#cfd3d8" stroke="none"/><rect x="1" y="9" width="12" height="3" fill="#cfd3d8" stroke="none"/></svg>
<div class="t" style="left:168px;top:772.5px;font-size:9.3px;color:#333;transform:translateX(-50%)">Vendors</div>
<svg style="left:161px;top:808.5px" width="14" height="14" viewBox="0 0 14 14" fill="none" stroke="#cfd3d8" stroke-width="1"><path d="M12 6A5 5 0 0 0 2.5 4.5M2 8a5 5 0 0 0 9.5 1.5M2.5 1.5v3h3M11.5 12.5v-3h-3"/></svg>
<div class="t" style="left:168px;top:836.0px;font-size:9.3px;color:#333;transform:translateX(-50%)">Refresh Token</div>
<!-- main -->
<div class="a" style="left:219px;top:416px;width:1120px;height:523px;background:#fafafa"></div>
<div class="t" style="left:240px;top:435px;font-size:20px;color:#151515;-webkit-text-stroke:0.3px #151515">Orders</div>
<div class="t" style="left:240px;top:465px;font-size:10.6px;color:#6b6f76">Manage all your orders here.</div>
<!-- top buttons -->
<div class="a" style="left:1012px;top:436px;width:87px;height:26px;border-radius:4px;background:#fff;border:1px solid #dcdfe4"></div>
<svg style="left:1022px;top:442px" width="13" height="13" viewBox="0 0 13 13" fill="none" stroke="#333" stroke-width="1.1"><path d="M8.5 1.5l3 3L4 12H1v-3z"/><path d="M6 12h6"/></svg>
<div class="t" style="left:1039px;top:444px;font-size:9.7px;color:#222">View Drafts</div>
<div class="a" style="left:1107px;top:436px;width:87px;height:26px;border-radius:4px;background:#fff;border:1px solid #dcdfe4"></div>
<svg style="left:1118px;top:442px" width="13" height="13" viewBox="0 0 13 13" fill="none" stroke="#333" stroke-width="1.2"><path d="M6.5 1v7.5M3.5 5.5l3 3 3-3M1 8.5V12h11V8.5"/></svg>
<div class="t" style="left:1135px;top:444px;font-size:9.7px;color:#222">Export CSV</div>
<div class="a" style="left:1207px;top:436px;width:112px;height:26px;border-radius:4px;background:#1570ef"></div>
<svg style="left:1218px;top:444px" width="10" height="10" viewBox="0 0 10 10" stroke="#fff" stroke-width="1.3"><path d="M5 0v10M0 5h10"/></svg>
<div class="t" style="left:1234px;top:444px;font-size:9.6px;color:#fff">Create new order</div>
<!-- filters -->
<div class="a" style="left:240px;top:493px;width:228px;height:28px;border-radius:5px;background:#fff;border:1px solid #dfe2e6"></div>
<svg style="left:249px;top:501px" width="12" height="12" viewBox="0 0 12 12" fill="none" stroke="#555" stroke-width="1.2"><circle cx="5" cy="5" r="4.2"/><path d="M8 8l3.3 3.3"/></svg>
<div class="t" style="left:267px;top:502px;font-size:10.3px;color:#8a8f96">Order ID</div>
<div class="a" style="left:479px;top:493px;width:171px;height:28px;border-radius:5px;background:#fff;border:1px solid #dfe2e6"></div>
<div class="t" style="left:488px;top:502px;font-size:10.7px;color:#8a8f96">Filter by Domicile</div>
<svg style="left:631px;top:504px" width="9" height="6" viewBox="0 0 9 6" fill="none" stroke="#666" stroke-width="1.1"><path d="M0.5 0.8l4 4 4-4"/></svg>
<div class="a" style="left:659px;top:493px;width:170px;height:28px;border-radius:5px;background:#fff;border:1px solid #dfe2e6"></div>
<div class="t" style="left:668px;top:502px;font-size:10.7px;color:#8a8f96">Filter by Company</div>
<svg style="left:810px;top:504px" width="9" height="6" viewBox="0 0 9 6" fill="none" stroke="#666" stroke-width="1.1"><path d="M0.5 0.8l4 4 4-4"/></svg>
<div class="a" style="left:837px;top:493px;width:171px;height:28px;border-radius:5px;background:#fff;border:1px solid #dfe2e6"></div>
<div class="t" style="left:846px;top:502px;font-size:10.7px;color:#8a8f96">Filter by Status</div>
<svg style="left:989px;top:504px" width="9" height="6" viewBox="0 0 9 6" fill="none" stroke="#666" stroke-width="1.1"><path d="M0.5 0.8l4 4 4-4"/></svg>
<div class="a" style="left:1016px;top:495px;width:42px;height:25px;border-radius:4px;background:#1570ef"></div>
<div class="t" style="left:1026px;top:503px;font-size:9.8px;color:#fff">Filter</div>
<div class="a" style="left:1066px;top:495px;width:66px;height:25px;border-radius:4px;background:#fff;border:1px solid #dfe2e6"></div>
<div class="t" style="left:1075px;top:503px;font-size:9.5px;color:#222">Clear Filter</div>
<!-- orders list card -->
<div class="a" style="left:240px;top:537px;width:228px;height:402px;background:#fff;border:1px solid #e6e8eb;border-bottom:none;border-radius:5px 5px 0 0"></div>
<div class="t" style="left:255px;top:552px;font-size:12.3px;color:#151515">Orders</div>
<div class="a" style="left:298px;top:550px;width:18px;height:15px;border-radius:7px;-webkit-text-stroke:0.2px currentColor;background:#e8f0fd;color:#1f55c9;font-size:8px;line-height:15px;text-align:center">12</div>
<div class="a" style="left:241px;top:579px;width:226px;height:1px;background:#eceef0"></div>
<div class="t" style="left:255px;top:589px;font-size:8.3px;color:#555">Name</div>
<svg style="left:280px;top:588px" width="7" height="9" viewBox="0 0 7 9" fill="none" stroke="#555" stroke-width="1"><path d="M3.5 0v8M0.5 5l3 3 3-3"/></svg>
<div class="a" style="left:241px;top:607px;width:226px;height:1px;background:#eceef0"></div>
<div class="a" style="left:241px;top:701px;width:226px;height:46px;background:#f6f7f9"></div>
<div class="t" style="left:255px;top:619.75px;font-size:10px;color:#1a1a1a;-webkit-text-stroke:0.25px #1a1a1a">2279454</div>
<div class="t" style="left:255px;top:633.25px;font-size:9.2px;color:#6b6f76">TL Flex Holdings LLC</div>
<div class="a" style="left:364px;top:623.25px;width:44px;height:14px;border-radius:7px;-webkit-text-stroke:0.2px currentColor;background:#ecf9f1;color:#1f9254;font-size:8.2px;line-height:14px;text-align:center;white-space:nowrap">Complete</div>
<svg style="left:438px;top:626.75px" width="6" height="10" viewBox="0 0 6 10" fill="none" stroke="#444" stroke-width="1.1"><path d="M0.8 0.8l4 4.2-4 4.2"/></svg>
<div class="a" style="left:241px;top:653.75px;width:226px;height:1px;background:#eceef0"></div>
<div class="t" style="left:255px;top:665.8px;font-size:10px;color:#1a1a1a;-webkit-text-stroke:0.25px #1a1a1a">2279451</div>
<div class="t" style="left:255px;top:679.3px;font-size:9.2px;color:#6b6f76">TL Flex Holdings LLC</div>
<div class="a" style="left:350px;top:669.3px;width:71px;height:14px;border-radius:7px;-webkit-text-stroke:0.2px currentColor;background:#fff5e8;color:#c2600a;font-size:8.2px;line-height:14px;text-align:center;white-space:nowrap">Approval Pending</div>
<svg style="left:438px;top:672.8px" width="6" height="10" viewBox="0 0 6 10" fill="none" stroke="#444" stroke-width="1.1"><path d="M0.8 0.8l4 4.2-4 4.2"/></svg>
<div class="a" style="left:241px;top:699.8px;width:226px;height:1px;background:#eceef0"></div>
<div class="t" style="left:255px;top:712.2px;font-size:10px;color:#1a1a1a;-webkit-text-stroke:0.25px #1a1a1a">2276451</div>
<div class="t" style="left:255px;top:725.7px;font-size:9.2px;color:#6b6f76">TL Flex Holdings LLC</div>
<div class="a" style="left:361px;top:715.7px;width:48px;height:14px;border-radius:7px;-webkit-text-stroke:0.2px currentColor;background:#ecf9f1;color:#1f9254;font-size:8.2px;line-height:14px;text-align:center;white-space:nowrap">In Progress</div>
<svg style="left:438px;top:719.2px" width="6" height="10" viewBox="0 0 6 10" fill="none" stroke="#444" stroke-width="1.1"><path d="M0.8 0.8l4 4.2-4 4.2"/></svg>
<div class="a" style="left:241px;top:746.2px;width:226px;height:1px;background:#eceef0"></div>
<div class="t" style="left:255px;top:758.6px;font-size:10px;color:#1a1a1a;-webkit-text-stroke:0.25px #1a1a1a">2276450</div>
<div class="t" style="left:255px;top:772.1px;font-size:9.2px;color:#6b6f76">TL Flex Holdings LLC</div>
<div class="a" style="left:372px;top:762.1px;width:28px;height:14px;border-radius:7px;-webkit-text-stroke:0.2px currentColor;background:#f3f4f6;color:#333;font-size:8.2px;line-height:14px;text-align:center;white-space:nowrap">Draft</div>
<svg style="left:438px;top:765.6px" width="6" height="10" viewBox="0 0 6 10" fill="none" stroke="#444" stroke-width="1.1"><path d="M0.8 0.8l4 4.2-4 4.2"/></svg>
<div class="a" style="left:241px;top:792.6px;width:226px;height:1px;background:#eceef0"></div>
<div class="t" style="left:255px;top:804.6px;font-size:10px;color:#1a1a1a;-webkit-text-stroke:0.25px #1a1a1a">2276433</div>
<div class="t" style="left:255px;top:818.1px;font-size:9.2px;color:#6b6f76">TL Flex Holdings LLC</div>
<div class="a" style="left:365px;top:808.1px;width:42px;height:14px;border-radius:7px;-webkit-text-stroke:0.2px currentColor;background:#fff3ec;color:#d0520f;font-size:8.2px;line-height:14px;text-align:center;white-space:nowrap">Review</div>
<svg style="left:438px;top:811.6px" width="6" height="10" viewBox="0 0 6 10" fill="none" stroke="#444" stroke-width="1.1"><path d="M0.8 0.8l4 4.2-4 4.2"/></svg>
<div class="a" style="left:241px;top:838.6px;width:226px;height:1px;background:#eceef0"></div>
<div class="t" style="left:255px;top:851px;font-size:10px;color:#1a1a1a;-webkit-text-stroke:0.25px #1a1a1a">2276433</div>
<div class="t" style="left:255px;top:864.5px;font-size:9.2px;color:#6b6f76">TL Flex Holdings LLC</div>
<div class="a" style="left:359px;top:854.5px;width:52px;height:14px;border-radius:7px;-webkit-text-stroke:0.2px currentColor;background:#ecf9f1;color:#1f9254;font-size:8.2px;line-height:14px;text-align:center;white-space:nowrap">Submitted</div>
<svg style="left:438px;top:858px" width="6" height="10" viewBox="0 0 6 10" fill="none" stroke="#444" stroke-width="1.1"><path d="M0.8 0.8l4 4.2-4 4.2"/></svg>
<div class="a" style="left:241px;top:885px;width:226px;height:1px;background:#eceef0"></div>
<div class="t" style="left:255px;top:897.4px;font-size:10px;color:#1a1a1a;-webkit-text-stroke:0.25px #1a1a1a">2216433</div>
<div class="t" style="left:255px;top:910.9px;font-size:9.2px;color:#6b6f76">TL Flex Holdings LLC</div>
<div class="a" style="left:363px;top:900.9px;width:45px;height:14px;border-radius:7px;-webkit-text-stroke:0.2px currentColor;background:#ecf9f1;color:#1f9254;font-size:8.2px;line-height:14px;text-align:center;white-space:nowrap">Created</div>
<svg style="left:438px;top:904.4px" width="6" height="10" viewBox="0 0 6 10" fill="none" stroke="#444" stroke-width="1.1"><path d="M0.8 0.8l4 4.2-4 4.2"/></svg>
<div class="a" style="left:241px;top:931.4px;width:226px;height:1px;background:#eceef0"></div>
<!-- detail card 1 -->
<div class="a" style="left:480px;top:537px;width:818px;height:57px;border-radius:5px;background:#fff;border:1px solid #e6e8eb"></div>
<div class="t" style="left:494px;top:551px;font-size:12.2px;color:#151515;-webkit-text-stroke:0.45px #151515">#2276451</div>
<div class="a" style="left:555px;top:551px;width:49px;height:14px;border-radius:4px;background:#ecf9f1;color:#1f9254;font-size:7.6px;line-height:14px;text-align:center">In Progress</div>
<div class="t" style="left:494px;top:571px;font-size:9.3px;color:#6b6f76">TL Flex Holdings LLC | Delaware - <span style="color:#1f55c9">Contact_Person.</span></div>
<div class="a" style="left:825px;top:553px;width:94px;height:25px;border-radius:4px;background:#1570ef"></div>
<div class="t" style="left:835px;top:561px;font-size:9.6px;color:#fff">Approval Pending</div>
<div class="a" style="left:927px;top:553px;width:81px;height:25px;border-radius:4px;background:#1570ef"></div>
<div class="t" style="left:938px;top:561px;font-size:9.6px;color:#fff">Update status</div>
<div class="a" style="left:1015px;top:553px;width:59px;height:25px;border-radius:4px;background:#fff;border:1px solid #dcdfe4"></div>
<svg style="left:1025px;top:559px" width="13" height="13" viewBox="0 0 13 13" fill="none" stroke="#444" stroke-width="1.1"><path d="M3 4V1h7v3M3 9.5H1.5V5.5a1.5 1.5 0 0 1 1.5-1.5h7a1.5 1.5 0 0 1 1.5 1.5v4H10M3 7.5h7V12H3z"/></svg>
<div class="t" style="left:1043px;top:561px;font-size:9.6px;color:#222">Print</div>
<div class="a" style="left:1081px;top:553px;width:104px;height:25px;border-radius:4px;background:#fff;border:1px solid #dcdfe4"></div>
<svg style="left:1091px;top:559px" width="13" height="13" viewBox="0 0 13 13" fill="none" stroke="#444" stroke-width="1.1"><path d="M3 4V1h7v3M3 9.5H1.5V5.5a1.5 1.5 0 0 1 1.5-1.5h7a1.5 1.5 0 0 1 1.5 1.5v4H10M3 7.5h7V12H3z"/></svg>
<div class="t" style="left:1109px;top:561px;font-size:9.6px;color:#222">Fill Online Form</div>
<div class="a" style="left:1192px;top:553px;width:91px;height:25px;border-radius:4px;background:#fff;border:1px solid #dcdfe4"></div>
<svg style="left:1202px;top:559px" width="13" height="13" viewBox="0 0 13 13" fill="none" stroke="#444" stroke-width="1.2"><path d="M6.5 1v7.5M3.5 5.5l3 3 3-3M1 8.5V12h11V8.5"/></svg>
<div class="t" style="left:1220px;top:561px;font-size:9.6px;color:#222">Save as PDF</div>
<!-- detail card 2 -->
<div class="a" style="left:480px;top:605px;width:818px;height:143px;border-radius:5px;background:#fff;border:1px solid #e6e8eb"></div>
<div class="t" style="left:494px;top:620.8px;font-size:9.5px;color:#1a1a1a;-webkit-text-stroke:0.3px #1a1a1a">Placed By</div>
<div class="t" style="left:494px;top:638.7px;font-size:9.5px;color:#8a8f96">Name of customer</div>
<div class="t" style="left:494px;top:666.5px;font-size:9.5px;color:#1a1a1a;-webkit-text-stroke:0.3px #1a1a1a">Order Date</div>
<div class="t" style="left:494px;top:684.4px;font-size:9.5px;color:#8a8f96">Mar 20, 2024</div>
<div class="t" style="left:624px;top:620.8px;font-size:9.5px;color:#1a1a1a;-webkit-text-stroke:0.3px #1a1a1a">Requester</div>
<div class="t" style="left:624px;top:638.7px;font-size:9.5px;color:#8a8f96">Requester</div>
<div class="t" style="left:624px;top:666.5px;font-size:9.5px;color:#1a1a1a;-webkit-text-stroke:0.3px #1a1a1a">Expected Date</div>
<div class="t" style="left:624px;top:684.4px;font-size:9.5px;color:#8a8f96">Mar 26, 2024</div>
<div class="t" style="left:753.5px;top:620.8px;font-size:9.5px;color:#1a1a1a;-webkit-text-stroke:0.3px #1a1a1a">PO/External ID</div>
<div class="t" style="left:753.5px;top:638.7px;font-size:9.5px;color:#8a8f96">2122415485</div>
<div class="t" style="left:753.5px;top:666.5px;font-size:9.5px;color:#1a1a1a;-webkit-text-stroke:0.3px #1a1a1a">Completion Date</div>
<div class="t" style="left:753.5px;top:684.4px;font-size:9.5px;color:#8a8f96">Mar 26, 2024</div>
<div class="t" style="left:883px;top:620.8px;font-size:9.5px;color:#1a1a1a;-webkit-text-stroke:0.3px #1a1a1a">Requester Email ID</div>
<div class="t" style="left:883px;top:638.7px;font-size:9.5px;color:#8a8f96">abc@xyz.com</div>
<div class="t" style="left:883px;top:666.5px;font-size:9.5px;color:#1a1a1a;-webkit-text-stroke:0.3px #1a1a1a">Service Level</div>
<div class="t" style="left:883px;top:684.4px;font-size:9.5px;color:#8a8f96">Same Day Service</div>
<div class="a" style="left:1018px;top:617px;width:1px;height:119px;background:#eceef0"></div>
<div class="a" style="left:1029px;top:619px;width:255px;height:117px;border-radius:6px;background:#fff;border:1px solid #f1f2f4;box-shadow:0 1px 3px rgba(0,0,0,.07)"></div>
<svg style="left:1044px;top:634px" width="30" height="30" viewBox="0 0 30 30"><defs><clipPath id="ca"><circle cx="15" cy="15" r="13"/></clipPath></defs><circle cx="15" cy="15" r="14.5" fill="#efe6f2"/><g clip-path="url(#ca)"><rect width="30" height="30" fill="#c9bfa8"/><ellipse cx="15" cy="13" rx="6" ry="7" fill="#6a5038"/><path d="M8 10Q15 2 22 10L21 8Q15 4 9 8z" fill="#222"/><path d="M4 30Q15 18 26 30z" fill="#e6e1d5"/></g></svg>
<div class="t" style="left:1082px;top:636px;font-size:9.3px;color:#1a1a1a;-webkit-text-stroke:0.3px #1a1a1a">Alex Englard</div>
<div class="a" style="left:1082px;top:650px;width:41px;height:14px;border-radius:4px;background:#ecf9f1;color:#1f9254;font-size:8.5px;line-height:14px;text-align:center">Primary</div>
<div class="a" style="left:1043px;top:674px;width:226px;height:1px;background:#eceef0"></div>
<svg style="left:1043px;top:684px" width="13" height="13" viewBox="0 0 13 13" fill="none" stroke="#1f6fd6" stroke-width="1.2"><path d="M2.5 1h2l1 3-1.5 1a7 7 0 0 0 4 4l1-1.5 3 1v2a1.5 1.5 0 0 1-1.5 1.5A10.5 10.5 0 0 1 1 2.5 1.5 1.5 0 0 1 2.5 1z" stroke-linejoin="round"/></svg>
<div class="t" style="left:1062px;top:685px;font-size:9.3px;color:#6b6f76">2123874901</div>
<svg style="left:1043px;top:707px" width="13" height="12" viewBox="0 0 13 12" fill="none" stroke="#1f6fd6" stroke-width="1.3"><rect x="0.7" y="1" width="11.6" height="10" rx="1"/><path d="M1 2l5.5 4.5L12 2"/></svg>
<div class="t" style="left:1062px;top:708px;font-size:9.3px;color:#6b6f76">alex@vstatefilings.com</div>
<!-- hand cursor -->
<svg style="left:888px;top:723px" width="15" height="16" viewBox="0 0 15 16"><path d="M4 8.5V3.2a1.1 1.1 0 0 1 2.2 0V7V2.2a1.1 1.1 0 0 1 2.2 0V7V2.8a1.1 1.1 0 0 1 2.2 0V7.2V4.3a1.1 1.1 0 0 1 2.2 0v5.5c0 3-2.2 5.2-5 5.2H7.2c-1.5 0-2.8-.7-3.6-1.9L1.3 9.6a1.1 1.1 0 0 1 1.8-1.3z" fill="#fff" stroke="#111" stroke-width="0.9" stroke-linejoin="round"/></svg>
<!-- tabs -->
<div class="t" style="left:496.4px;top:772.2px;font-size:9.6px;color:#1f55c9">Order Details</div>
<div class="t" style="left:567.5px;top:772.2px;font-size:9.6px;color:#555">Order Preview</div>
<div class="t" style="left:643.8px;top:772.2px;font-size:9.6px;color:#555">Company Details</div>
<div class="t" style="left:731.5px;top:772.2px;font-size:9.6px;color:#555">Documents</div>
<div class="t" style="left:795.8px;top:772.2px;font-size:9.6px;color:#555">Communication History</div>
<div class="t" style="left:911.3px;top:772.2px;font-size:9.6px;color:#555">Account Rep</div>
<div class="t" style="left:981px;top:772.2px;font-size:9.6px;color:#555">Invoice</div>
<div class="t" style="left:1026.8px;top:772.2px;font-size:9.6px;color:#555">Sales Receipt</div>
<div class="a" style="left:480px;top:795px;width:804px;height:1px;background:#e6e8eb"></div>
<div class="a" style="left:494px;top:793px;width:61px;height:2px;background:#1f55c9"></div>
<!-- order items / history -->
<div class="a" style="left:480px;top:806px;width:818px;height:133px;border-radius:5px 5px 0 0;background:#fff;border:1px solid #e6e8eb;border-bottom:none"></div>
<div class="a" style="left:494px;top:821px;width:387px;height:118px;border:1px solid #cfe2f7;border-bottom:none;border-radius:4px 4px 0 0"></div>
<div class="a" style="left:494px;top:821px;width:387px;height:26px;background:#eef5fd;border:1px solid #cfe2f7;border-radius:4px 4px 0 0"></div>
<div class="t" style="left:505px;top:829px;font-size:9.6px;color:#1d5aa8">Order items</div>
<div class="a" style="left:896px;top:821px;width:388px;height:118px;border:1px solid #cfe2f7;border-bottom:none;border-radius:4px 4px 0 0"></div>
<div class="a" style="left:896px;top:821px;width:388px;height:26px;background:#eef5fd;border:1px solid #cfe2f7;border-radius:4px 4px 0 0"></div>
<div class="t" style="left:906px;top:829px;font-size:9.6px;color:#1d5aa8">Order history</div>
<div class="a" style="left:563px;top:865px;width:56px;height:13px;border-radius:6px;background:#eefaf2"></div>
<div class="t" style="left:505px;top:865.5px;font-size:11.2px;color:#2a2a2a">State Filing</div>
<svg style="left:565px;top:865px" width="10" height="10" viewBox="0 0 10 10" fill="none" stroke="#1f9254" stroke-width="1"><rect x="0.5" y="0.5" width="9" height="9" rx="3"/><path d="M2.5 5l2 2 3-3.5"/></svg>
<div class="t" style="left:578px;top:866px;font-size:8px;color:#1f9254">Complete</div>
<div class="t" style="left:509px;top:889px;font-size:9.3px;color:#6b6f76">&bull;&nbsp; The filing fee for the a</div>
<div class="t" style="left:509px;top:904px;font-size:9.3px;color:#6b6f76">&bull;&nbsp; Government fee</div>
<div class="a" style="left:504px;top:923px;width:370px;height:1px;background:#eceef0"></div>
<svg style="left:907px;top:856px" width="20" height="20" viewBox="0 0 20 20" fill="none" stroke="#1f9254" stroke-width="1.5"><path d="M17.5 8A8 8 0 1 1 14 3"/><path d="M5.5 9.5l3.5 3.5L18.5 3"/></svg>
<div class="t" style="left:935px;top:858px;font-size:9.5px;color:#222">Order created</div>
<div class="t" style="left:1224px;top:858px;font-size:8.8px;color:#555">Mar 26, 2024</div>
<div class="t" style="left:935px;top:871px;font-size:9.4px;color:#6b6f76">Processed by <span style="color:#1f55c9">Customer_Name</span></div>
<div class="t" style="left:935px;top:891.5px;font-size:9.4px;color:#8a8f96">Order has been placed successfully.</div>
<svg style="left:907px;top:930px" width="20" height="10" viewBox="0 0 20 10" fill="none" stroke="#1f9254" stroke-width="1.5"><path d="M1.5 9A8 8 0 0 1 14 3"/></svg>
<div class="t" style="left:935px;top:932px;font-size:9.5px;color:#222">At State</div>
<div class="t" style="left:1224px;top:932px;font-size:8.8px;color:#555">Mar 26, 2024</div>
<!-- figma popup -->
<div class="a" style="left:608px;top:868px;width:307px;height:64px;border-radius:8px;background:#fff;box-shadow:0 1px 4px rgba(0,0,0,.18)"></div>
<div class="a" style="left:608px;top:868px;width:307px;height:31px;border-radius:8px 8px 0 0;background:#0d99ff"></div>
<div class="t" style="left:616px;top:880px;font-size:7.6px;font-weight:700;color:#fff">Sign up to comment, edit, inspect and more.</div>
<div class="a" style="left:806px;top:876px;width:39px;height:15px;border-radius:3px;border:1px solid #b8e0ff"></div>
<div class="t" style="left:811px;top:880px;font-size:7.5px;color:#fff">Sign up</div>
<div class="a" style="left:851px;top:876px;width:56px;height:16px;border-radius:3px;background:#fff"></div>
<svg style="left:856px;top:879px" width="10" height="10" viewBox="0 0 10 10"><path d="M9.8 5.1c0-.3 0-.7-.1-1H5v1.9h2.7A2.3 2.3 0 0 1 6.7 7.5v1.2h1.6c1-.9 1.5-2.2 1.5-3.6z" fill="#4285f4"/><path d="M5 10c1.4 0 2.5-.5 3.3-1.3L6.7 7.5c-.4.3-1 .5-1.7.5a2.9 2.9 0 0 1-2.7-2H.6v1.2A5 5 0 0 0 5 10z" fill="#34a853"/><path d="M2.3 6a3 3 0 0 1 0-2V2.8H.6a5 5 0 0 0 0 4.4z" fill="#fbbc05"/><path d="M5 2c.7 0 1.4.3 1.9.7l1.4-1.4A5 5 0 0 0 .6 2.8L2.3 4A2.9 2.9 0 0 1 5 2z" fill="#ea4335"/></svg>
<div class="t" style="left:868px;top:880px;font-size:8px;color:#222">Continue</div>
<svg style="left:618px;top:908px" width="13" height="13" viewBox="0 0 13 13" fill="none" stroke="#222" stroke-width="1.1"><path d="M1 1l10 4-4.5 1.5L5 11z" stroke-linejoin="round"/></svg>
<div class="a" style="left:640px;top:904px;width:22px;height:21px;border-radius:4px;background:#0d99ff"></div>
<svg style="left:645px;top:908px" width="12" height="13" viewBox="0 0 12 13" fill="none" stroke="#fff" stroke-width="1"><path d="M2.5 7V4a1 1 0 0 1 2 0V2.5a1 1 0 0 1 2 0V2a1 1 0 0 1 2 0v1a1 1 0 0 1 2 0v5a4.5 4.5 0 0 1-4.5 4.5h-.5a4 4 0 0 1-3.5-2L.8 8a1 1 0 0 1 1.7-1z"/></svg>
<svg style="left:672px;top:908px" width="13" height="13" viewBox="0 0 13 13" fill="none" stroke="#222" stroke-width="1.1"><path d="M6.5 1a5.5 5.5 0 1 1-4.3 8.9L1 12l.6-3A5.5 5.5 0 0 1 6.5 1z"/></svg>
<div class="a" style="left:692px;top:900px;width:1px;height:31px;background:#eee"></div>
<svg style="left:705px;top:908px" width="12" height="13" viewBox="0 0 12 13" stroke="#222" stroke-width="1.2"><path d="M3.5 0v13M8.5 0v13M0 3.5h12M0 9h12"/></svg>
<svg style="left:724px;top:913px" width="6" height="4" viewBox="0 0 6 4" fill="none" stroke="#222"><path d="M.5.5l2.5 2.5L5.5.5"/></svg>
<svg style="left:745px;top:909px" width="12" height="12" viewBox="0 0 12 12" fill="none" stroke="#222" stroke-width="1.1"><rect x="0.5" y="0.5" width="11" height="11" rx="1"/></svg>
<svg style="left:763px;top:913px" width="6" height="4" viewBox="0 0 6 4" fill="none" stroke="#222"><path d="M.5.5l2.5 2.5L5.5.5"/></svg>
<svg style="left:783px;top:908px" width="13" height="13" viewBox="0 0 13 13" fill="none" stroke="#222" stroke-width="1.1"><path d="M1 1l4 1.5 6 6-2.5 2.5-6-6z"/><circle cx="5" cy="5" r="1"/></svg>
<svg style="left:802px;top:913px" width="6" height="4" viewBox="0 0 6 4" fill="none" stroke="#222"><path d="M.5.5l2.5 2.5L5.5.5"/></svg>
<svg style="left:820px;top:908px" width="12" height="12" viewBox="0 0 12 12" fill="none" stroke="#222" stroke-width="1.2"><path d="M1 2V.8h10V2M6 .8v11M4 11.5h4"/></svg>
<svg style="left:848px;top:908px" width="13" height="13" viewBox="0 0 13 13" fill="none" stroke="#222" stroke-width="1"><circle cx="3" cy="3" r="2.2"/><circle cx="10" cy="3" r="2.2"/><circle cx="3" cy="10" r="2.2"/><path d="M10 7.5v5M7.5 10h5"/></svg>
<div class="a" style="left:871px;top:900px;width:1px;height:31px;background:#eee"></div>
<div class="a" style="left:880px;top:905px;width:28px;height:20px;border-radius:4px;background:#f0f0f0"></div>
<div class="a" style="left:880px;top:905px;width:18px;height:20px;border-radius:4px;background:#fff;border:1px solid #e5e5e5"></div>
<svg style="left:883px;top:911px" width="12" height="8" viewBox="0 0 12 8" fill="none" stroke="#222" stroke-width="1"><path d="M3.5 1L.8 4l2.7 3M8.5 1l2.7 3-2.7 3M7 .5L5 7.5"/></svg>
<!-- figma top toolbars -->
<div class="t" style="left:247px;top:364px;font-size:26px;font-weight:700;color:#3a3a3a">e</div>
<div class="t" style="left:255px;top:385px;font-size:11px;font-weight:700;color:#2a6fb5">s</div>
<div class="a" style="left:121px;top:367px;width:133px;height:33px;border-radius:9px;background:#fff;box-shadow:0 1px 3px rgba(0,0,0,.12)"></div>
<svg style="left:134px;top:378px" width="8" height="11" viewBox="0 0 8 11" fill="none" stroke="#333" stroke-width="0.9"><path d="M4 .5H2a1.75 1.75 0 0 0 0 3.5h2zM4 .5h2a1.75 1.75 0 0 1 0 3.5H4zM4 4H2a1.75 1.75 0 0 0 0 3.5h2zM4 7.5H2A1.75 1.75 0 1 0 4 9.2z"/><circle cx="5.8" cy="5.8" r="1.75"/></svg>
<svg style="left:146px;top:382px" width="5" height="3" viewBox="0 0 5 3" fill="none" stroke="#444" stroke-width="0.8"><path d="M.3.3l2.2 2.2L4.7.3"/></svg>
<div class="t" style="left:166px;top:379px;font-size:9.1px;color:#222">Design - UAT</div>
<svg style="left:232px;top:379px" width="11" height="9" viewBox="0 0 11 9" fill="none" stroke="#333" stroke-width="0.9"><rect x="0.5" y="0.5" width="10" height="8" rx="1"/><path d="M3.5 .5v8"/></svg>
<div class="a" style="left:1202px;top:367px;width:199px;height:33px;border-radius:9px;background:#fff;box-shadow:0 1px 3px rgba(0,0,0,.12)"></div>
<div class="a" style="left:1215px;top:376px;width:16px;height:16px;border-radius:50%;background:#0d7de3;color:#fff;font-size:8.5px;line-height:16px;text-align:center">S</div>
<div class="a" style="left:1231px;top:376px;width:16px;height:16px;border-radius:50%;background:#6a7899;color:#fff;font-size:8.5px;line-height:16px;text-align:center;border:0.5px solid #fff">A</div>
<svg style="left:1251px;top:382px" width="5" height="3" viewBox="0 0 5 3" fill="none" stroke="#444" stroke-width="0.8"><path d="M.3.3l2.2 2.2L4.7.3"/></svg>
<div class="a" style="left:1264px;top:375px;width:44px;height:18px;border-radius:3px;border:1px solid #eee"></div>
<div class="t" style="left:1274px;top:380px;font-size:8px;color:#444">94%</div>
<svg style="left:1299px;top:382px" width="5" height="3" viewBox="0 0 5 3" fill="none" stroke="#444" stroke-width="0.8"><path d="M.3.3l2.2 2.2L4.7.3"/></svg>
<svg style="left:1318px;top:378px" width="10" height="11" viewBox="0 0 10 11" fill="none" stroke="#333" stroke-width="1"><path d="M1 1l8 4.5L1 10z" stroke-linejoin="round"/></svg>
<svg style="left:1337px;top:382px" width="5" height="3" viewBox="0 0 5 3" fill="none" stroke="#444" stroke-width="0.8"><path d="M.3.3l2.2 2.2L4.7.3"/></svg>
<div class="a" style="left:1353px;top:374px;width:37px;height:21px;border-radius:3px;border:1px solid #eee"></div>
<div class="t" style="left:1361px;top:380px;font-size:7.6px;color:#222">Share</div>
<!-- cookie banner -->
<div class="a" style="left:113px;top:939px;width:1296px;height:44px;background:#fff;border-radius:0 0 5px 5px"></div>
<div class="t" style="left:124px;top:957px;font-size:7.94px;color:#333">This website uses cookies, pixel tags, and local storage for performance, personalization, and marketing purposes. We use our own cookies and some from third parties. Only essential cookies are turned on by default. <span style="color:#1a7fd6">Cookies settings</span></div>
<div class="a" style="left:1211px;top:954px;width:85px;height:16px;border-radius:3px;border:1px solid #e2e2e2;background:#fff"></div>
<div class="t" style="left:1216px;top:958px;font-size:8px;color:#222">Do not allow cookies</div>
<div class="a" style="left:1301px;top:953px;width:70px;height:17px;border-radius:3px;background:#1a8cff"></div>
<div class="t" style="left:1306px;top:958px;font-size:7.25px;font-weight:700;color:#fff">Allow all cookies</div>
<svg style="left:1383px;top:956px" width="9" height="9" viewBox="0 0 9 9" stroke="#333" stroke-width="1"><path d="M.5.5l8 8M8.5.5l-8 8"/></svg>
<!-- window bottom border + remote taskbar -->
<div class="a" style="left:110px;top:983px;width:1302px;height:2.5px;background:#0b3d6a"></div>
<div class="a" style="left:110px;top:985.5px;width:1302px;height:29.5px;background:#cfeef0"></div>
<svg style="left:123px;top:990px" width="16" height="19" viewBox="0 0 16 19"><path d="M3 2l4 13M6 1l3 14M9 1l2 14" stroke="#8a6a3a" stroke-width="1"/><circle cx="8" cy="15.5" r="2.8" fill="#e0301e"/></svg>
<div class="a" style="left:131px;top:990px;width:11px;height:11px;border-radius:50%;background:#b3261e;color:#fff;font-size:7px;line-height:11px;text-align:center">3</div>
<div class="t" style="left:145px;top:992px;font-size:7.5px;color:#333">MI - RCB</div>
<div class="t" style="left:145px;top:1003px;font-size:7.9px;color:#555">Game score</div>
<svg style="left:454px;top:994px" width="16" height="16" viewBox="0 0 16 16" fill="#1b8fe0"><rect width="7.5" height="7.5"/><rect x="8.5" width="7.5" height="7.5"/><rect y="8.5" width="7.5" height="7.5"/><rect x="8.5" y="8.5" width="7.5" height="7.5"/></svg>
<div class="a" style="left:479px;top:992px;width:148px;height:20px;border-radius:10px;background:#e9f8f8;border:1px solid #c8e4e6"></div>
<svg style="left:486px;top:997px" width="10" height="10" viewBox="0 0 10 10" fill="none" stroke="#222" stroke-width="1.2"><circle cx="4.2" cy="4.2" r="3.5"/><path d="M6.8 6.8L9.5 9.5"/></svg>
<div class="t" style="left:504px;top:997px;font-size:8.7px;color:#555">Search</div>
<svg style="left:594px;top:995px" width="30" height="17" viewBox="0 0 30 17"><ellipse cx="15" cy="14.5" rx="14" ry="2.5" fill="#6fae3a"/><ellipse cx="16" cy="8" rx="9" ry="5" fill="#9a8580"/><ellipse cx="6" cy="7" rx="4" ry="3" fill="#8a7570"/><path d="M10 11v4M13 11v4M20 11v4M23 11v4" stroke="#7a6560" stroke-width="1.5"/></svg>
<svg style="left:636px;top:994px" width="16" height="16" viewBox="0 0 16 16"><rect x="5" y="0" width="11" height="10" fill="#f4f4f4" stroke="#ddd" stroke-width="0.5"/><rect x="0" y="5" width="11" height="11" fill="#1f1f1f"/><rect x="5" y="5" width="6" height="5" fill="#ccc"/></svg>
<svg style="left:665px;top:994px" width="17" height="16" viewBox="0 0 29 26"><path d="M16 7h9c2.5 0 3.2 1.8 2.7 3.8L25 21c-.8 3-2.6 4.5-5.5 4.5H11c-2.5 0-3.3-2-2.8-4L11 11c.8-2.7 2.5-4 5-4z" fill="url(#cp2)"/><path d="M8 0.5h10c2.5 0 3.2 1.8 2.7 3.8L18 14.5c-.8 3-2.6 4.5-5.5 4.5H3.5C1 19 .2 17 .7 15L3 5c.8-2.7 2.5-4.5 5-4.5z" fill="url(#cp1)"/><path d="M14.5 7.5L11.5 19" stroke="#202221" stroke-width="1.3"/></svg>
<svg style="left:695px;top:993px" width="17" height="17" viewBox="0 0 31 31"><circle cx="15.5" cy="15.5" r="15" fill="url(#eg1)"/><path d="M30.5 15.5C30.5 7 24 0.5 15.5 0.5 8 0.5 2 6 1 13c3-4 8-6 13-5 7 1 10 6 8.5 10-1 2-4 2.5-6 1.5 5 1 8.5 0 11-2 2-1 3-2 3-2z" fill="url(#eg2)"/><path d="M8 21c0-5 4-8 8-8 3 0 4 1.5 4 1.5C18 17 12 17.5 11.5 23c-.3 3 2 5.5 5 7C11 30 8 26 8 21z" fill="#0b4fa3"/></svg>
<svg style="left:725px;top:993px" width="16" height="17" viewBox="0 0 16 17"><ellipse cx="8" cy="8.5" rx="7.5" ry="8" fill="#e31b23"/><ellipse cx="8" cy="8.5" rx="3.2" ry="6" fill="#cfeef0"/></svg>
<svg style="left:755px;top:994px" width="16" height="15" viewBox="0 0 31 27"><path d="M0 3a2 2 0 0 1 2-2h8l3 3h16a2 2 0 0 1 2 2v3H0z" fill="#e8a710"/><rect x="0" y="5" width="31" height="22" rx="1.5" fill="#fcd45c"/><rect x="6" y="19" width="19" height="8" rx="2" fill="#0c74d4"/></svg>
<svg style="left:785px;top:993px" width="16" height="17" viewBox="0 0 16 17"><path d="M5 4V2.5a3 3 0 0 1 6 0V4" fill="none" stroke="#1c4e8a" stroke-width="1.2"/><rect x="0" y="4" width="16" height="13" rx="2" fill="#1c5aa3"/><rect x="4" y="8" width="3.5" height="3.5" fill="#f25022"/><rect x="8.5" y="8" width="3.5" height="3.5" fill="#7fba00"/><rect x="4" y="12" width="3.5" height="3.5" fill="#00a4ef"/><rect x="8.5" y="12" width="3.5" height="3.5" fill="#ffb900"/></svg>
<svg style="left:814px;top:993px" width="17" height="17" viewBox="0 0 17 17"><rect x="5" y="1" width="12" height="15" rx="1.5" fill="#28a8ea"/><rect x="0" y="4" width="10" height="10" rx="1.5" fill="#0a64ad"/><text x="5" y="12" font-size="8" font-weight="700" text-anchor="middle" fill="#fff" font-family="Liberation Sans">O</text></svg>
<svg style="left:844px;top:993px" width="17" height="17" viewBox="0 0 17 17"><rect width="17" height="17" fill="#2b8a8f"/><circle cx="8.5" cy="8.5" r="5.5" fill="none" stroke="#5ad0e0" stroke-width="1.6"/></svg>
<svg style="left:875px;top:993px" width="15" height="17" viewBox="0 0 15 17"><path d="M7.5 0.5L14.5 3v8c0 3-3 5-7 6-4-1-7-3-7-6V3z" fill="#c8102e"/><path d="M3.5 4.5l4 3 4-3V12l-4 2.5L3.5 12z" fill="#cfeef0"/></svg>
<div class="a" style="left:899px;top:989px;width:25px;height:25px;border-radius:3px;background:#def3f4"></div>
<svg style="left:904px;top:995px" width="17" height="15" viewBox="0 0 32 28"><circle cx="19" cy="5" r="4" fill="#7b83eb"/><rect x="14" y="10" width="14" height="17" rx="5" fill="#7b83eb"/><rect x="0" y="6" width="17" height="17" rx="2" fill="#4b53bc"/><path d="M4 10h9v2.2H9.7V19H7.3v-6.8H4z" fill="#fff"/></svg>
<div class="a" style="left:913px;top:990px;width:11px;height:11px;border-radius:50%;background:#c92a2a;color:#fff;font-size:7px;line-height:11px;text-align:center">2</div>
<div class="a" style="left:907px;top:1012px;width:10px;height:2px;background:#2f7f8a"></div>
<div class="a" style="left:934px;top:994px;width:16px;height:16px;border-radius:2px;background:#f7e21a"></div>
<svg style="left:936px;top:996px" width="12" height="12" viewBox="0 0 12 12" fill="none" stroke="#111" stroke-width="1.6"><circle cx="6" cy="6" r="4.8"/><path d="M3.5 6l2 2 3.5-4"/></svg>
<svg style="left:964px;top:994px" width="16" height="16" viewBox="0 0 31 31"><circle cx="15.5" cy="15.5" r="15" fill="#fbbc04"/><path d="M15.5 15.5L2.5 8A15 15 0 0 1 28.5 8z" fill="#ea4335"/><path d="M15.5 15.5L2.5 8A15 15 0 0 0 15.5 30.5z" fill="#34a853"/><circle cx="15.5" cy="15.5" r="7" fill="#fff"/><circle cx="15.5" cy="15.5" r="5.5" fill="#4285f4"/></svg>
<div class="a" style="left:973px;top:990px;width:10px;height:10px;border-radius:50%;background:#8a7a6a"></div>
<svg style="left:993px;top:994px" width="17" height="16" viewBox="0 0 17 16"><rect x="4" y="0" width="13" height="16" rx="1.5" fill="#21a366"/><rect x="0" y="3" width="10" height="10" rx="1" fill="#107c41"/><text x="5" y="11" font-size="8" font-weight="700" text-anchor="middle" fill="#fff" font-family="Liberation Sans">X</text></svg>
<svg style="left:1023px;top:994px" width="17" height="16" viewBox="0 0 17 16"><rect x="4" y="0" width="13" height="16" rx="1.5" fill="#41a5ee"/><rect x="0" y="3" width="10" height="10" rx="1" fill="#185abd"/><text x="5" y="11" font-size="7.5" font-weight="700" text-anchor="middle" fill="#fff" font-family="Liberation Sans">W</text></svg>
<svg style="left:1054px;top:994px" width="15" height="16" viewBox="0 0 15 16"><rect width="15" height="16" rx="2" fill="#c5141b"/><path d="M3 12c2-3 4-7 4.5-9 .5 2 2 5 4.5 7-3-.5-6 0-9 2z" fill="none" stroke="#fff" stroke-width="1.1"/></svg>
<div class="a" style="left:700px;top:1012px;width:6px;height:2px;background:#6a7a7c"></div>
<div class="a" style="left:730px;top:1012px;width:6px;height:2px;background:#6a7a7c"></div>
<div class="a" style="left:939px;top:1012px;width:6px;height:2px;background:#6a7a7c"></div>
<div class="a" style="left:969px;top:1012px;width:6px;height:2px;background:#6a7a7c"></div>
<div class="a" style="left:998px;top:1012px;width:6px;height:2px;background:#6a7a7c"></div>
<div class="a" style="left:1028px;top:1012px;width:6px;height:2px;background:#6a7a7c"></div>
<div class="a" style="left:1058px;top:1012px;width:6px;height:2px;background:#6a7a7c"></div>
<svg style="left:1170px;top:999px" width="9" height="6" viewBox="0 0 9 6" fill="none" stroke="#222" stroke-width="1.2"><path d="M.8 5l3.7-3.7L8.2 5"/></svg>
<svg style="left:1190px;top:995px" width="12" height="12" viewBox="0 0 12 12"><path d="M2.5 9a2.5 2.5 0 0 1 0-5 3.5 3.5 0 0 1 6.5-1A2.8 2.8 0 0 1 9.5 9z" fill="none" stroke="#333" stroke-width="1.1"/><circle cx="9" cy="9" r="2.8" fill="#2b7bd6"/></svg>
<svg style="left:1212px;top:995px" width="12" height="12" viewBox="0 0 12 12" fill="none" stroke="#333" stroke-width="1.1"><path d="M10.5 5A4.5 4.5 0 0 0 2 4M1.5 7A4.5 4.5 0 0 0 8 10.5M8 1.5l2.5 3.5M3.5 10.5L1 7"/><circle cx="9.5" cy="9.5" r="2.2" fill="#f39c12" stroke="none"/></svg>
<div class="a" style="left:1229px;top:989px;width:20px;height:25px;border-radius:3px;background:#e2f5f6"></div>
<svg style="left:1234px;top:996px" width="11" height="12" viewBox="0 0 11 12" fill="none" stroke="#222" stroke-width="1.1"><rect x="3.5" y="0.5" width="4" height="7" rx="2" fill="#222"/><path d="M1.5 5.5a4 4 0 0 0 8 0M5.5 9.5v2M0.5 0.5l10 11"/></svg>
<div class="t" style="left:1257px;top:993px;font-size:7.6px;color:#333">ENG</div>
<div class="t" style="left:1261px;top:1004px;font-size:7.6px;color:#333">IN</div>
<svg style="left:1285px;top:996px" width="11" height="9" viewBox="0 0 11 9" fill="none" stroke="#333" stroke-width="1"><path d="M.6 3a7 7 0 0 1 9.8 0M2.3 5a4.5 4.5 0 0 1 6.4 0M4 7a2 2 0 0 1 3 0"/></svg>
<svg style="left:1302px;top:996px" width="11" height="9" viewBox="0 0 11 9" fill="none" stroke="#333" stroke-width="0.9"><path d="M.5 3h2L5 .5v8L2.5 6H.5z"/><path d="M7 3l3 3M10 3L7 6"/></svg>
<svg style="left:1317px;top:996px" width="12" height="8" viewBox="0 0 12 8" fill="none" stroke="#333" stroke-width="1"><rect x="0.5" y="0.5" width="10" height="7" rx="1"/><rect x="2" y="2" width="4" height="4" fill="#333"/><path d="M11.3 3v2"/></svg>
<div class="t" style="left:1363px;top:992px;font-size:8px;color:#222">11:38</div>
<div class="t" style="left:1340px;top:1003px;font-size:8.3px;color:#222">08-04-2025</div>
<svg style="left:1388px;top:995px" width="10" height="12" viewBox="0 0 10 12" fill="none" stroke="#222" stroke-width="1"><path d="M1.5 9V5.5a3.5 3.5 0 0 1 7 0V9zM0.5 9h9M4 11h2"/></svg>
<!-- speaker overlay label -->
<div class="a" style="left:15px;top:975px;width:177px;height:30px;border-radius:6px;background:rgba(0,0,0,.47)"></div>
<div class="t" style="left:22px;top:983px;font-size:14.5px;color:#fff">Santosh Narate</div>
<svg style="left:161px;top:981px" width="17" height="17" viewBox="0 0 17 17" stroke="#fff" stroke-width="1.6"><path d="M8.5 0v17M0 8.5h17"/></svg>
</body></html>
